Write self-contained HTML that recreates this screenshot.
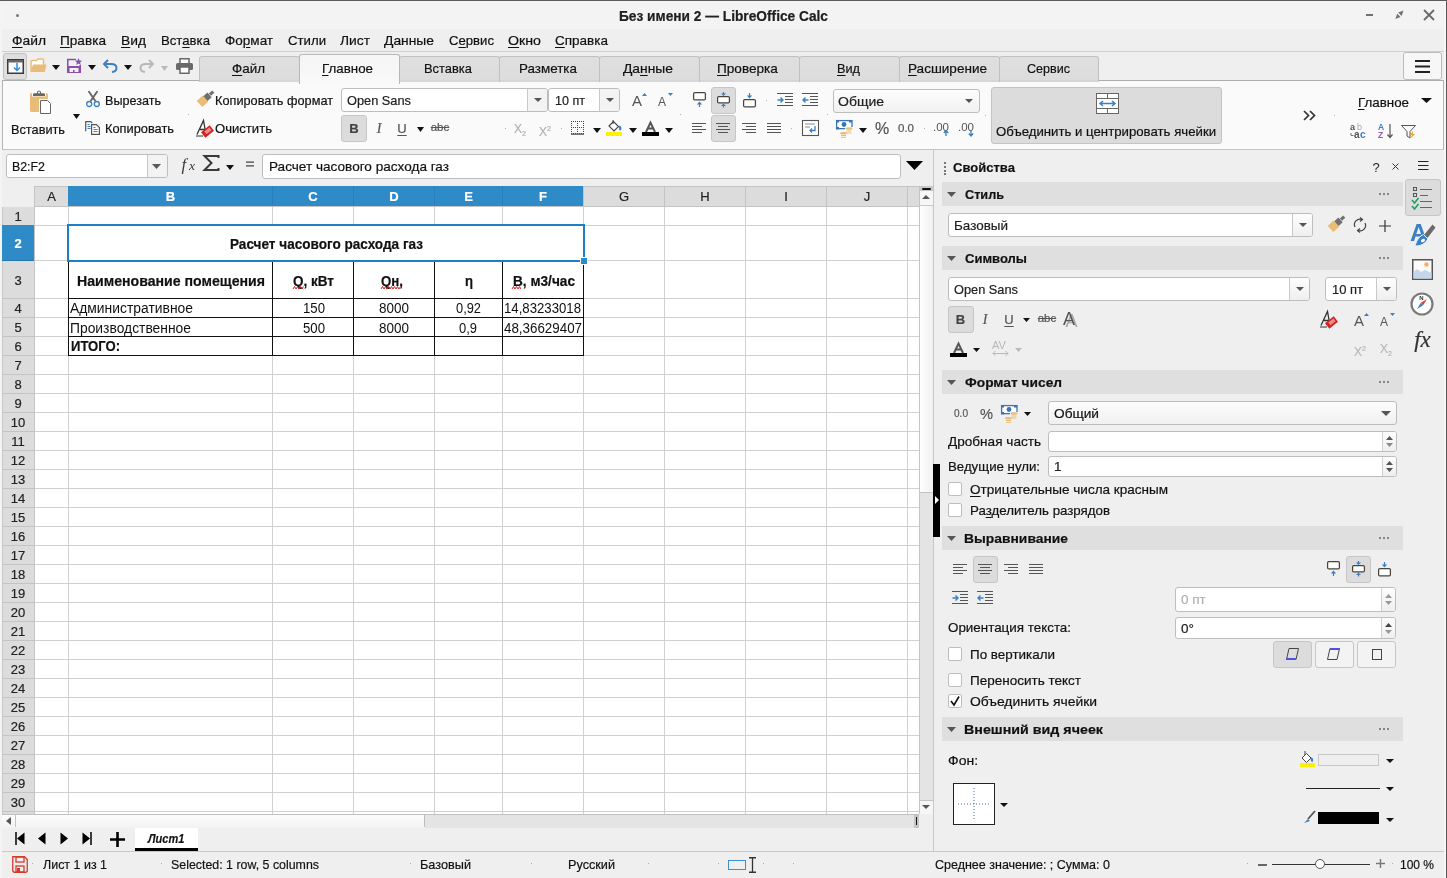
<!DOCTYPE html><html><head><meta charset="utf-8"><style>
html,body{margin:0;padding:0;width:1447px;height:878px;overflow:hidden;background:#efefef;}
body{position:relative;font-family:"Liberation Sans",sans-serif;}
body div, body svg{position:absolute;box-sizing:border-box;white-space:nowrap;} svg{overflow:visible;}
body div{-webkit-text-stroke:0.2px currentColor;} u{text-decoration:underline;text-underline-offset:2px;text-decoration-thickness:1px;}
</style></head><body><div style="left:0;top:0;width:1447px;height:878px;will-change:transform;">

<div style="left:0px;top:0px;width:1447px;height:29px;background:#f3f3f3;"></div>
<div style="left:0px;top:0px;width:1447px;height:1px;background:#5a5a5a;"></div>
<div style="left:1444px;top:1px;width:2px;height:877px;background:#f6f6f6;"></div>
<div style="left:1446px;top:0px;width:1px;height:878px;background:#5a5a5a;"></div>
<div style="left:0px;top:1px;width:2px;height:877px;background:#f4f4f4;"></div>
<div style="left:16px;top:14px;width:3px;height:3px;background:#777;border-radius:2px;"></div>
<div style="left:619.00px;top:7.0px;height:18px;line-height:18px;font-size:14px;font-weight:bold;color:#202020;transform:scaleX(0.9796);transform-origin:0 0;">Без имени 2 — LibreOffice Calc</div>
<div style="left:1366px;top:14px;width:7px;height:2px;background:#707070;"></div>
<svg style="left:1395px;top:10px;" width="9" height="10" viewBox="0 0 9 10"><path d="M8.5 0.5 L3.2 2.6 L6.6 6 Z M0.3 9 L2.3 3.8 L5.5 7 Z" fill="#707070"/></svg>
<svg style="left:1423px;top:9px;" width="12" height="12" viewBox="0 0 12 12"><path d="M1 1 L11 11 M11 1 L1 11" stroke="#6a6a6a" stroke-width="1.8"/></svg>
<div style="left:2px;top:29px;width:1443px;height:22px;background:#efefef;"></div>
<div style="left:2px;top:51px;width:1443px;height:1px;background:#cfcfcf;"></div>
<div style="left:12.00px;top:31.85px;height:17.5px;line-height:17.5px;font-size:13.5px;font-weight:normal;color:#111;transform:scaleX(1.0238);transform-origin:0 0;"><u>Ф</u>айл</div>
<div style="left:60.00px;top:31.85px;height:17.5px;line-height:17.5px;font-size:13.5px;font-weight:normal;color:#111;transform:scaleX(1.0081);transform-origin:0 0;"><u>П</u>равка</div>
<div style="left:121.00px;top:31.85px;height:17.5px;line-height:17.5px;font-size:13.5px;font-weight:normal;color:#111;transform:scaleX(1.0231);transform-origin:0 0;"><u>В</u>ид</div>
<div style="left:161.00px;top:31.85px;height:17.5px;line-height:17.5px;font-size:13.5px;font-weight:normal;color:#111;transform:scaleX(0.9757);transform-origin:0 0;">Вст<u>а</u>вка</div>
<div style="left:225.00px;top:31.85px;height:17.5px;line-height:17.5px;font-size:13.5px;font-weight:normal;color:#111;transform:scaleX(1.0016);transform-origin:0 0;">Фо<u>р</u>мат</div>
<div style="left:288.00px;top:31.85px;height:17.5px;line-height:17.5px;font-size:13.5px;font-weight:normal;color:#111;transform:scaleX(0.9774);transform-origin:0 0;">Стили</div>
<div style="left:340.00px;top:31.85px;height:17.5px;line-height:17.5px;font-size:13.5px;font-weight:normal;color:#111;transform:scaleX(1.0217);transform-origin:0 0;">Лист</div>
<div style="left:384.00px;top:31.85px;height:17.5px;line-height:17.5px;font-size:13.5px;font-weight:normal;color:#111;transform:scaleX(1.0245);transform-origin:0 0;"><u>Д</u>анные</div>
<div style="left:449.00px;top:31.85px;height:17.5px;line-height:17.5px;font-size:13.5px;font-weight:normal;color:#111;transform:scaleX(0.9732);transform-origin:0 0;">С<u>е</u>рвис</div>
<div style="left:508.00px;top:31.85px;height:17.5px;line-height:17.5px;font-size:13.5px;font-weight:normal;color:#111;transform:scaleX(1.0514);transform-origin:0 0;"><u>О</u>кно</div>
<div style="left:555.00px;top:31.85px;height:17.5px;line-height:17.5px;font-size:13.5px;font-weight:normal;color:#111;transform:scaleX(1.0002);transform-origin:0 0;"><u>С</u>правка</div>
<div style="left:2px;top:52px;width:1443px;height:28px;background:#efefef;"></div>
<div style="left:3px;top:53px;width:24px;height:27px;background:#dedede;border:1px solid #c2c2c2;border-radius:3px;"></div>
<svg style="left:7px;top:59px;" width="17" height="15" viewBox="0 0 17 15"><rect x="0.75" y="0.75" width="15.5" height="13.5" fill="#fff" stroke="#3a3a3a" stroke-width="1.5"/><rect x="1" y="1" width="15" height="2.5" fill="#666"/><path d="M10 4 V11 M7 8.5 L10 11.5 L13 8.5" stroke="#2a8ee0" stroke-width="1.5" fill="none"/></svg>
<svg style="left:30px;top:58px;" width="17" height="15" viewBox="0 0 17 15"><path d="M1 13 V3.5 Q1 2.5 2 2.5 H6.5 L8 1 H12.5 Q13.5 1 13.5 2 V7" fill="#fff" stroke="#e8bd78" stroke-width="1.5"/><path d="M3 6.5 H16.5 L14.8 14 H0.3 Z" fill="#e8bd78"/></svg>
<svg style="left:52px;top:65px;" width="8" height="5" viewBox="0 0 8 5"><path d="M0 0 H8 L4.0 5 Z" fill="#111"/></svg>
<svg style="left:67px;top:58px;" width="15" height="16" viewBox="0 0 15 16"><path d="M0.75 15 V1.5 H9" fill="none" stroke="#8a4db0" stroke-width="1.5"/><path d="M13.25 7 V15" fill="none" stroke="#8a4db0" stroke-width="1.5"/><path d="M0 8 H14 V15 H0 Z M2.5 10 V14 H11.5 V10 Z" fill="#8a4db0" fill-rule="evenodd"/><rect x="6" y="12" width="1.5" height="2" fill="#8a4db0"/><path d="M11.5 0 L12.5 2.6 L15 2.8 L13.1 4.5 L13.7 7 L11.5 5.6 L9.3 7 L9.9 4.5 L8 2.8 L10.5 2.6 Z" fill="#8a4db0"/></svg>
<svg style="left:88px;top:65px;" width="8" height="5" viewBox="0 0 8 5"><path d="M0 0 H8 L4.0 5 Z" fill="#111"/></svg>
<svg style="left:103px;top:59px;" width="15" height="14" viewBox="0 0 15 14"><path d="M5 1 L1 5 L5 9" fill="none" stroke="#3b7fc4" stroke-width="2"/><path d="M1.5 5 H8 Q13.5 5 13.5 9 Q13.5 12.5 9 13" fill="none" stroke="#3b7fc4" stroke-width="2"/></svg>
<svg style="left:124px;top:65px;" width="8" height="5" viewBox="0 0 8 5"><path d="M0 0 H8 L4.0 5 Z" fill="#111"/></svg>
<svg style="left:139px;top:59px;" width="15" height="14" viewBox="0 0 15 14"><path d="M10 1 L14 5 L10 9" fill="none" stroke="#b8b8b8" stroke-width="2"/><path d="M13.5 5 H7 Q1.5 5 1.5 9 Q1.5 12.5 6 13" fill="none" stroke="#b8b8b8" stroke-width="2"/></svg>
<svg style="left:161px;top:66px;" width="7" height="5" viewBox="0 0 7 5"><path d="M0 0 H7 L3.5 5 Z" fill="#b8b8b8"/></svg>
<svg style="left:176px;top:58px;" width="17" height="16" viewBox="0 0 17 16"><rect x="4" y="0.75" width="9" height="5" fill="#fff" stroke="#6a6a6a" stroke-width="1.5"/><rect x="0" y="5" width="17" height="7" rx="1.5" fill="#6a6a6a"/><rect x="4" y="9" width="9" height="6.25" fill="#fff" stroke="#6a6a6a" stroke-width="1.5"/></svg>
<div style="left:199px;top:56px;width:101px;height:26px;background:linear-gradient(#dfdfdf,#dcdcdc);border:1px solid #c0c0c0;border-bottom:1px solid #d0d0d0;border-radius:3px 3px 0 0;"></div>
<div style="left:232.00px;top:60.25px;height:17.5px;line-height:17.5px;font-size:13.5px;font-weight:normal;color:#111;transform:scaleX(0.9937);transform-origin:0 0;"><u>Ф</u>айл</div>
<div style="left:399px;top:56px;width:101px;height:26px;background:linear-gradient(#dfdfdf,#dcdcdc);border:1px solid #c0c0c0;border-bottom:1px solid #d0d0d0;border-radius:3px 3px 0 0;"></div>
<div style="left:424.00px;top:60.25px;height:17.5px;line-height:17.5px;font-size:13.5px;font-weight:normal;color:#111;transform:scaleX(0.9558);transform-origin:0 0;">Вставка</div>
<div style="left:499px;top:56px;width:101px;height:26px;background:linear-gradient(#dfdfdf,#dcdcdc);border:1px solid #c0c0c0;border-bottom:1px solid #d0d0d0;border-radius:3px 3px 0 0;"></div>
<div style="left:519.00px;top:60.25px;height:17.5px;line-height:17.5px;font-size:13.5px;font-weight:normal;color:#111;transform:scaleX(0.9934);transform-origin:0 0;">Разметка</div>
<div style="left:599px;top:56px;width:101px;height:26px;background:linear-gradient(#dfdfdf,#dcdcdc);border:1px solid #c0c0c0;border-bottom:1px solid #d0d0d0;border-radius:3px 3px 0 0;"></div>
<div style="left:623.00px;top:60.25px;height:17.5px;line-height:17.5px;font-size:13.5px;font-weight:normal;color:#111;transform:scaleX(1.0245);transform-origin:0 0;">Да<u>н</u>ные</div>
<div style="left:699px;top:56px;width:101px;height:26px;background:linear-gradient(#dfdfdf,#dcdcdc);border:1px solid #c0c0c0;border-bottom:1px solid #d0d0d0;border-radius:3px 3px 0 0;"></div>
<div style="left:717.00px;top:60.25px;height:17.5px;line-height:17.5px;font-size:13.5px;font-weight:normal;color:#111;transform:scaleX(1.0075);transform-origin:0 0;"><u>П</u>роверка</div>
<div style="left:799px;top:56px;width:101px;height:26px;background:linear-gradient(#dfdfdf,#dcdcdc);border:1px solid #c0c0c0;border-bottom:1px solid #d0d0d0;border-radius:3px 3px 0 0;"></div>
<div style="left:837.00px;top:60.25px;height:17.5px;line-height:17.5px;font-size:13.5px;font-weight:normal;color:#111;transform:scaleX(0.9413);transform-origin:0 0;"><u>В</u>ид</div>
<div style="left:899px;top:56px;width:101px;height:26px;background:linear-gradient(#dfdfdf,#dcdcdc);border:1px solid #c0c0c0;border-bottom:1px solid #d0d0d0;border-radius:3px 3px 0 0;"></div>
<div style="left:908.00px;top:60.25px;height:17.5px;line-height:17.5px;font-size:13.5px;font-weight:normal;color:#111;transform:scaleX(1.0037);transform-origin:0 0;"><u>Р</u>асширение</div>
<div style="left:999px;top:56px;width:100px;height:26px;background:linear-gradient(#dfdfdf,#dcdcdc);border:1px solid #c0c0c0;border-bottom:1px solid #d0d0d0;border-radius:3px 3px 0 0;"></div>
<div style="left:1027.00px;top:60.25px;height:17.5px;line-height:17.5px;font-size:13.5px;font-weight:normal;color:#111;transform:scaleX(0.9300);transform-origin:0 0;">Сервис</div>
<div style="left:1403px;top:52px;width:39px;height:28px;background:#f7f7f7;border:1px solid #bcbcbc;border-radius:3px;"></div>
<svg style="left:1415px;top:60px;" width="16" height="13" viewBox="0 0 16 13"><path d="M0 1 H15 M0 6.5 H15 M0 12 H15" stroke="#222" stroke-width="2"/></svg>
<div style="left:2px;top:80px;width:1442px;height:70px;background:#fafafa;border:1px solid #b4b4b4;border-top-color:#adadad;border-bottom-color:#c4c4c4;"></div>
<div style="left:199px;top:80px;width:101px;height:2px;background:#d6d6d6;border-left:1px solid #c0c0c0;border-right:1px solid #c0c0c0;"></div>
<div style="left:399px;top:80px;width:101px;height:2px;background:#d6d6d6;border-left:1px solid #c0c0c0;border-right:1px solid #c0c0c0;"></div>
<div style="left:499px;top:80px;width:101px;height:2px;background:#d6d6d6;border-left:1px solid #c0c0c0;border-right:1px solid #c0c0c0;"></div>
<div style="left:599px;top:80px;width:101px;height:2px;background:#d6d6d6;border-left:1px solid #c0c0c0;border-right:1px solid #c0c0c0;"></div>
<div style="left:699px;top:80px;width:101px;height:2px;background:#d6d6d6;border-left:1px solid #c0c0c0;border-right:1px solid #c0c0c0;"></div>
<div style="left:799px;top:80px;width:101px;height:2px;background:#d6d6d6;border-left:1px solid #c0c0c0;border-right:1px solid #c0c0c0;"></div>
<div style="left:899px;top:80px;width:101px;height:2px;background:#d6d6d6;border-left:1px solid #c0c0c0;border-right:1px solid #c0c0c0;"></div>
<div style="left:999px;top:80px;width:100px;height:2px;background:#d6d6d6;border-left:1px solid #c0c0c0;border-right:1px solid #c0c0c0;"></div>
<div style="left:299px;top:54px;width:101px;height:30px;background:linear-gradient(#f6f6f6,#f7f7f7 70%,#fafafa);border:1px solid #b8b8b8;border-bottom:none;border-radius:3px 3px 0 0;"></div>
<div style="left:322.00px;top:59.55px;height:17.5px;line-height:17.5px;font-size:13.5px;font-weight:normal;color:#111;transform:scaleX(0.9889);transform-origin:0 0;"><u>Г</u>лавное</div>
<svg style="left:30px;top:90px;" width="23" height="25" viewBox="0 0 23 25"><rect x="0" y="3" width="18" height="19" rx="1.5" fill="#e8bd78"/><rect x="2" y="0" width="14" height="6.5" fill="#fafafa"/><path d="M3 6 H15 V4.5 Q15 3.2 13.8 3.2 H11.2 Q11.2 0.6 9 0.6 Q6.8 0.6 6.8 3.2 H4.2 Q3 3.2 3 4.5 Z" fill="#666"/><circle cx="9" cy="2.6" r="1" fill="#fafafa"/><path d="M9 9 H18.5 L22 12.5 V24.5 H9 Z" fill="#fafafa"/><path d="M10.5 10.5 H17.5 L20.5 13.5 V23.5 H10.5 Z" fill="#fff" stroke="#666" stroke-width="1"/></svg>
<div style="left:11.00px;top:120.94999999999999px;height:17.5px;line-height:17.5px;font-size:13.5px;font-weight:normal;color:#111;transform:scaleX(0.9434);transform-origin:0 0;">Вставить</div>
<svg style="left:73px;top:114px;" width="7" height="5" viewBox="0 0 7 5"><path d="M0 0 H7 L3.5 5 Z" fill="#111"/></svg>
<svg style="left:86px;top:91px;" width="15" height="16" viewBox="0 0 15 16"><path d="M3 0.8 L9 9.5 M11 0.8 L5 9.5" stroke="#666" stroke-width="1.9" stroke-linecap="round"/><circle cx="3.2" cy="13" r="2.5" fill="none" stroke="#3b7fc4" stroke-width="1.3"/><circle cx="10.8" cy="13" r="2.5" fill="none" stroke="#3b7fc4" stroke-width="1.3"/></svg>
<div style="left:105.00px;top:91.75px;height:17.5px;line-height:17.5px;font-size:13.5px;font-weight:normal;color:#111;transform:scaleX(0.9322);transform-origin:0 0;">Вырезать</div>
<svg style="left:85px;top:121px;" width="16" height="15" viewBox="0 0 16 15"><path d="M0.7 10.3 V0.7 H5.8 L7.3 2.2" fill="none" stroke="#555" stroke-width="1.2"/><path d="M6.6 3.6 H11.5 L14.4 6.5 V13.4 H6.6 Z" fill="#fff" stroke="#555" stroke-width="1.2"/><path d="M2.5 3.5 H4.5 M2.5 5.5 H5.5 M2.5 7.5 H5.5 M8.5 6.5 H10.5 M8.5 8.5 H12.5 M8.5 10.5 H12.5" stroke="#3b7fc4" stroke-width="1"/></svg>
<div style="left:105.00px;top:119.85px;height:17.5px;line-height:17.5px;font-size:13.5px;font-weight:normal;color:#111;transform:scaleX(0.9491);transform-origin:0 0;">Копировать</div>
<svg style="left:196px;top:93px;" width="17" height="15" viewBox="0 0 17 15"><g transform="translate(3.5,11) rotate(-42)"><path d="M0 -4.2 H8 V4.2 H0 Z" fill="#e9bd77"/><rect x="8" y="-3.2" width="5.5" height="6.4" fill="#707070"/><rect x="14" y="-1.6" width="4.5" height="3.2" fill="#707070"/></g></svg>
<div style="left:215.00px;top:92.25px;height:17.5px;line-height:17.5px;font-size:13.5px;font-weight:normal;color:#111;transform:scaleX(0.9424);transform-origin:0 0;">Копировать формат</div>
<svg style="left:196px;top:119px;" width="18" height="18" viewBox="0 0 18 18"><path d="M1 15.5 L7.5 1.5 L9.5 12.5 M4 10.5 H9" stroke="#333" stroke-width="1.3" fill="none"/><path d="M0 17 H7" stroke="#333" stroke-width="1"/><g transform="translate(11.5,12.5) rotate(-38)"><rect x="-5.5" y="-3.5" width="11" height="7" fill="#d42222"/><rect x="-2.5" y="-2" width="6.5" height="3.5" fill="#f08a8a"/></g></svg>
<div style="left:215.00px;top:119.85px;height:17.5px;line-height:17.5px;font-size:13.5px;font-weight:normal;color:#111;transform:scaleX(0.9695);transform-origin:0 0;">Очистить</div>
<div style="left:341px;top:88px;width:207px;height:24px;background:#fff;border:1px solid #bdbdbd;border-radius:3px;"></div>
<div style="left:527px;top:89px;width:20px;height:22px;background:#f3f3f3;border-left:1px solid #c8c8c8;border-radius:0 2px 2px 0;"></div>
<svg style="left:533.5px;top:98.0px;" width="8" height="4" viewBox="0 0 8 4"><path d="M0 0 H8 L4 4 Z" fill="#555"/></svg>
<div style="left:347.00px;top:91.65px;height:17.5px;line-height:17.5px;font-size:13.5px;font-weight:normal;color:#202020;transform:scaleX(0.9472);transform-origin:0 0;">Open Sans</div>
<div style="left:548px;top:88px;width:72px;height:24px;background:#fff;border:1px solid #bdbdbd;border-radius:3px;"></div>
<div style="left:599px;top:89px;width:20px;height:22px;background:#f3f3f3;border-left:1px solid #c8c8c8;border-radius:0 2px 2px 0;"></div>
<svg style="left:605.5px;top:98.0px;" width="8" height="4" viewBox="0 0 8 4"><path d="M0 0 H8 L4 4 Z" fill="#555"/></svg>
<div style="left:555.00px;top:91.65px;height:17.5px;line-height:17.5px;font-size:13.5px;font-weight:normal;color:#202020;transform:scaleX(0.9298);transform-origin:0 0;">10 пт</div>
<div style="left:341px;top:115px;width:26px;height:27px;background:#dcdcdc;border:1px solid #c6c6c6;border-radius:3px;"></div>
<div style="left:344.0px;width:20px;text-align:center;top:120.0px;height:17px;line-height:17px;font-size:13px;font-weight:bold;color:#444;">B</div>
<div style="left:369.0px;width:20px;text-align:center;top:119.5px;height:18px;line-height:18px;font-size:14px;font-weight:normal;color:#555;font-family:'Liberation Serif';"><i>I</i></div>
<div style="left:392.0px;width:20px;text-align:center;top:119.5px;height:17px;line-height:17px;font-size:13px;font-weight:normal;color:#555;"><u>U</u></div>
<svg style="left:417px;top:127px;" width="7" height="5" viewBox="0 0 7 5"><path d="M0 0 H7 L3.5 5 Z" fill="#111"/></svg>
<div style="left:428.0px;width:24px;text-align:center;top:120.25px;height:15.5px;line-height:15.5px;font-size:11.5px;font-weight:normal;color:#555;"><s>abc</s></div>
<div style="left:510.0px;width:20px;text-align:center;top:120.5px;height:16px;line-height:16px;font-size:12px;font-weight:normal;color:#b0b0b0;">X<sub style="font-size:7px">2</sub></div>
<div style="left:535.0px;width:20px;text-align:center;top:120.5px;height:16px;line-height:16px;font-size:12px;font-weight:normal;color:#b0b0b0;">X<sup style="font-size:7px">2</sup></div>
<svg style="left:632px;top:92px;" width="16" height="15" viewBox="0 0 16 15"><text x="0" y="14" font-family="Liberation Sans" font-size="15" fill="#555">A</text><path d="M10 4 L12.5 1 L15 4 Z" fill="#3b7fc4"/></svg>
<svg style="left:658px;top:92px;" width="16" height="15" viewBox="0 0 16 15"><text x="0" y="14" font-family="Liberation Sans" font-size="12" fill="#555">A</text><path d="M10 1 L12.5 4 L15 1 Z" fill="#3b7fc4"/></svg>
<svg style="left:693px;top:92px;" width="13" height="15" viewBox="0 0 13 15"><rect x="0.6" y="0.6" width="11.8" height="7.3" rx="1.2" fill="#fff" stroke="#4a4538" stroke-width="1.25"/><path d="M6.5 15 V11.5" stroke="#3b7fc4" stroke-width="1.2"/><path d="M3.8 12.5 L6.5 9.5 L9.2 12.5 Z" fill="#3b7fc4"/></svg>
<div style="left:711px;top:87px;width:25px;height:27px;background:#dcdcdc;border:1px solid #c6c6c6;border-radius:3px;"></div>
<svg style="left:717px;top:92px;" width="13" height="15" viewBox="0 0 13 15"><rect x="0.6" y="4.6" width="11.8" height="6.3" rx="1.2" fill="#fff" stroke="#4a4538" stroke-width="1.25"/><path d="M6.5 0 V2" stroke="#3b7fc4" stroke-width="1.2"/><path d="M4 1.5 L6.5 4 L9 1.5 Z M4 14 L6.5 11.5 L9 14 Z" fill="#3b7fc4"/><path d="M6.5 13.5 V15.5" stroke="#3b7fc4" stroke-width="1.2"/></svg>
<svg style="left:743px;top:93px;" width="13" height="15" viewBox="0 0 13 15"><rect x="0.6" y="6.6" width="11.8" height="7.3" rx="1.2" fill="#fff" stroke="#4a4538" stroke-width="1.25"/><path d="M6.5 0 V3" stroke="#3b7fc4" stroke-width="1.2"/><path d="M3.8 2.5 L6.5 5.5 L9.2 2.5 Z" fill="#3b7fc4"/></svg>
<svg style="left:777px;top:93px;" width="17" height="14" viewBox="0 0 17 14"><path d="M0 0.5 H16 M8 3.5 H16 M8 6.5 H16 M8 9.5 H16 M0 12.5 H16" stroke="#555" stroke-width="1"/><path d="M0.5 7 H5.5 M3.5 4.5 L6 7 L3.5 9.5" stroke="#3b7fc4" stroke-width="1.4" fill="none"/></svg>
<svg style="left:802px;top:93px;" width="17" height="14" viewBox="0 0 17 14"><path d="M0 0.5 H16 M8 3.5 H16 M8 6.5 H16 M8 9.5 H16 M0 12.5 H16" stroke="#555" stroke-width="1"/><path d="M6.5 7 H1.5 M3.5 4.5 L1 7 L3.5 9.5" stroke="#3b7fc4" stroke-width="1.4" fill="none"/></svg>
<div style="left:833px;top:89px;width:147px;height:24px;background:linear-gradient(#fdfdfd,#f1f1f1);border:1px solid #bdbdbd;border-radius:3px;"></div>
<svg style="left:965px;top:99.0px;" width="8" height="4" viewBox="0 0 8 4"><path d="M0 0 H8 L4 4 Z" fill="#555"/></svg>
<div style="left:838.00px;top:92.75px;height:17.5px;line-height:17.5px;font-size:13.5px;font-weight:normal;color:#202020;transform:scaleX(1.0357);transform-origin:0 0;">Общие</div>
<svg style="left:571px;top:121px;" width="14" height="14" viewBox="0 0 14 14"><rect x="0" y="0" width="1" height="1" fill="#444"/><rect x="2" y="0" width="1" height="1" fill="#444"/><rect x="4" y="0" width="1" height="1" fill="#444"/><rect x="6" y="0" width="1" height="1" fill="#444"/><rect x="8" y="0" width="1" height="1" fill="#444"/><rect x="10" y="0" width="1" height="1" fill="#444"/><rect x="12" y="0" width="1" height="1" fill="#444"/><rect x="0" y="6" width="1" height="1" fill="#444"/><rect x="2" y="6" width="1" height="1" fill="#444"/><rect x="4" y="6" width="1" height="1" fill="#444"/><rect x="6" y="6" width="1" height="1" fill="#444"/><rect x="8" y="6" width="1" height="1" fill="#444"/><rect x="10" y="6" width="1" height="1" fill="#444"/><rect x="12" y="6" width="1" height="1" fill="#444"/><rect x="0" y="12" width="1" height="1" fill="#444"/><rect x="2" y="12" width="1" height="1" fill="#444"/><rect x="4" y="12" width="1" height="1" fill="#444"/><rect x="6" y="12" width="1" height="1" fill="#444"/><rect x="8" y="12" width="1" height="1" fill="#444"/><rect x="10" y="12" width="1" height="1" fill="#444"/><rect x="12" y="12" width="1" height="1" fill="#444"/><rect x="0" y="2" width="1" height="1" fill="#444"/><rect x="0" y="4" width="1" height="1" fill="#444"/><rect x="0" y="8" width="1" height="1" fill="#444"/><rect x="0" y="10" width="1" height="1" fill="#444"/><rect x="6" y="2" width="1" height="1" fill="#444"/><rect x="6" y="4" width="1" height="1" fill="#444"/><rect x="6" y="8" width="1" height="1" fill="#444"/><rect x="6" y="10" width="1" height="1" fill="#444"/><rect x="12" y="2" width="1" height="1" fill="#444"/><rect x="12" y="4" width="1" height="1" fill="#444"/><rect x="12" y="8" width="1" height="1" fill="#444"/><rect x="12" y="10" width="1" height="1" fill="#444"/><rect x="0" y="12.5" width="13" height="1.3" fill="#555"/></svg>
<svg style="left:593px;top:128px;" width="8" height="5" viewBox="0 0 8 5"><path d="M0 0 H8 L4.0 5 Z" fill="#111"/></svg>
<svg style="left:605px;top:119px;" width="18" height="18" viewBox="0 0 18 18"><path d="M4 7 L8.5 2.5 L13.5 7.5 L9 12 Z" fill="#fff" stroke="#444" stroke-width="1.1"/><path d="M8 1 V5" stroke="#444" stroke-width="1.1"/><path d="M14 7.5 Q16.5 9 14.5 11" stroke="#3b7fc4" stroke-width="2.2" fill="none"/><rect x="1" y="13" width="16" height="4" fill="#ffef00"/></svg>
<svg style="left:629px;top:128px;" width="8" height="5" viewBox="0 0 8 5"><path d="M0 0 H8 L4.0 5 Z" fill="#111"/></svg>
<svg style="left:642px;top:119px;" width="17" height="18" viewBox="0 0 17 18"><path d="M4 13 L8.5 3.5 L13 13 M5.5 9.5 H11.5" stroke="#555" stroke-width="2" fill="none"/><rect x="0" y="13" width="17" height="4" fill="#000"/></svg>
<svg style="left:665px;top:128px;" width="8" height="5" viewBox="0 0 8 5"><path d="M0 0 H8 L4.0 5 Z" fill="#111"/></svg>
<svg style="left:692px;top:122px;" width="14" height="13" viewBox="0 0 14 13"><path d="M0 1.5 H14 M0 4.5 H10 M0 7.5 H14 M0 10.5 H10" stroke="#555" stroke-width="1"/></svg>
<div style="left:711px;top:115px;width:25px;height:27px;background:#dcdcdc;border:1px solid #c6c6c6;border-radius:3px;"></div>
<svg style="left:716px;top:122px;" width="14" height="13" viewBox="0 0 14 13"><path d="M0 1.5 H14 M2 4.5 H12 M0 7.5 H14 M2 10.5 H12" stroke="#555" stroke-width="1"/></svg>
<svg style="left:742px;top:122px;" width="14" height="13" viewBox="0 0 14 13"><path d="M0 1.5 H14 M4 4.5 H14 M0 7.5 H14 M4 10.5 H14" stroke="#555" stroke-width="1"/></svg>
<svg style="left:767px;top:122px;" width="14" height="13" viewBox="0 0 14 13"><path d="M0 1.5 H14 M0 4.5 H14 M0 7.5 H14 M0 10.5 H14" stroke="#555" stroke-width="1"/></svg>
<svg style="left:802px;top:120px;" width="17" height="16" viewBox="0 0 17 16"><rect x="0.5" y="0.5" width="16" height="15" fill="#fff" stroke="#555" stroke-width="1.1"/><path d="M3 4 H13 M3 7 H8" stroke="#888" stroke-width="1"/><path d="M13 6 V10.5 H8 M10 8.5 L8 10.5 L10 12.5" stroke="#3b7fc4" stroke-width="1.3" fill="none"/></svg>
<svg style="left:835px;top:119px;" width="18" height="18" viewBox="0 0 18 18"><rect x="1.6" y="1.6" width="15.4" height="8" fill="#fff" stroke="#3a74b4" stroke-width="1.3"/><rect x="1" y="1" width="3" height="2.5" fill="#3a74b4"/><rect x="14" y="1" width="3" height="2.5" fill="#3a74b4"/><rect x="1" y="8" width="3" height="2.4" fill="#3a74b4"/><circle cx="9" cy="5.5" r="2.4" fill="#3a74b4"/><rect x="10" y="8" width="8" height="10" fill="#fafafa"/><rect x="5" y="11.5" width="6" height="7" fill="#fafafa"/><ellipse cx="14" cy="9.5" rx="3.5" ry="1.3" fill="#e8bd78"/><path d="M11.5 12 H16.5 M11.5 14 H16.5" stroke="#e8bd78" stroke-width="1"/><ellipse cx="8.5" cy="14.3" rx="3.5" ry="1.3" fill="#e8bd78"/><path d="M6 16.5 H11 M6 18.3 H11" stroke="#e8bd78" stroke-width="1"/></svg>
<svg style="left:859px;top:128px;" width="8" height="5" viewBox="0 0 8 5"><path d="M0 0 H8 L4.0 5 Z" fill="#111"/></svg>
<div style="left:872.0px;width:20px;text-align:center;top:118.5px;height:20px;line-height:20px;font-size:16px;font-weight:normal;color:#555;">%</div>
<div style="left:896.0px;width:20px;text-align:center;top:120.75px;height:15.5px;line-height:15.5px;font-size:11.5px;font-weight:normal;color:#555;">0.0</div>
<svg style="left:933px;top:119px;" width="18" height="18" viewBox="0 0 18 18"><text x="0" y="12" font-family="Liberation Sans" font-size="11.5" fill="#555">.00</text><path d="M13 17 V12 M10.8 14 L13 11.5 L15.2 14" stroke="#3b7fc4" stroke-width="1.3" fill="none"/></svg>
<svg style="left:958px;top:119px;" width="18" height="18" viewBox="0 0 18 18"><text x="0" y="12" font-family="Liberation Sans" font-size="11.5" fill="#555">.00</text><path d="M13 11.5 V16.5 M10.8 14.5 L13 17 L15.2 14.5" stroke="#3b7fc4" stroke-width="1.3" fill="none"/></svg>
<div style="left:991px;top:87px;width:231px;height:57px;background:#dcdcdc;border:1px solid #c4c4c4;border-radius:3px;"></div>
<svg style="left:1096px;top:93px;" width="24" height="22" viewBox="0 0 24 22"><rect x="0.5" y="0.5" width="22" height="20" fill="#fff" stroke="#666" stroke-width="1"/><path d="M0.5 5.5 H22.5 M0.5 15.5 H22.5 M11.5 0.5 V5.5 M11.5 15.5 V20.5" stroke="#666" stroke-width="1"/><path d="M4 10.5 H19 M7 8 L4 10.5 L7 13 M16 8 L19 10.5 L16 13" stroke="#3b7fc4" stroke-width="1.5" fill="none"/></svg>
<div style="left:996.00px;top:122.55000000000001px;height:17.5px;line-height:17.5px;font-size:13.5px;font-weight:normal;color:#111;transform:scaleX(0.9782);transform-origin:0 0;">Объединить и центрировать ячейки</div>
<svg style="left:1303px;top:110px;" width="13" height="11" viewBox="0 0 13 11"><path d="M1 1 L5.5 5.5 L1 10 M7 1 L11.5 5.5 L7 10" stroke="#333" stroke-width="1.7" fill="none"/></svg>
<div style="left:1358.00px;top:94.25px;height:17.5px;line-height:17.5px;font-size:13.5px;font-weight:normal;color:#111;transform:scaleX(0.9889);transform-origin:0 0;"><u>Г</u>лавное</div>
<svg style="left:1421px;top:98px;" width="11" height="5" viewBox="0 0 11 5"><path d="M0 0 H11 L5.5 5 Z" fill="#111"/></svg>
<svg style="left:1350px;top:123px;" width="18" height="16" viewBox="0 0 18 16"><text x="0" y="7" font-family="Liberation Sans" font-size="9" font-weight="bold" fill="#555">a</text><text x="7" y="7" font-family="Liberation Sans" font-size="9" fill="#aaa">b</text><text x="4" y="15" font-family="Liberation Sans" font-size="10" font-weight="bold" fill="#555">a</text><text x="10" y="15" font-family="Liberation Sans" font-size="10" font-weight="bold" fill="#3b7fc4">c</text><path d="M1 10 V12.5 H3.5" stroke="#3b7fc4" stroke-width="1" fill="none"/></svg>
<svg style="left:1378px;top:123px;" width="16" height="16" viewBox="0 0 16 16"><text x="0" y="7" font-family="Liberation Sans" font-size="8.5" font-weight="bold" fill="#3b7fc4">A</text><text x="0" y="15" font-family="Liberation Sans" font-size="8.5" font-weight="bold" fill="#9b59b6">Z</text><path d="M12 1 V14 M9.5 11.5 L12 14.5 L14.5 11.5" stroke="#555" stroke-width="1.2" fill="none"/></svg>
<svg style="left:1401px;top:125px;" width="16" height="14" viewBox="0 0 16 14"><path d="M0.5 0.5 H14.5 L9 6.5 V13 L6 11 V6.5 Z" fill="none" stroke="#555" stroke-width="1"/><path d="M12 6 L9 10 H11 L9.5 13.5 L14 9 H12 Z" fill="#f0a030"/></svg>
<div style="left:188px;top:114px;width:1px;height:1px;background:#b0b0b0;"></div>
<div style="left:505px;top:128px;width:1px;height:1px;background:#b0b0b0;"></div>
<div style="left:561px;top:128px;width:1px;height:1px;background:#b0b0b0;"></div>
<div style="left:680px;top:114px;width:1px;height:1px;background:#b0b0b0;"></div>
<div style="left:766px;top:100px;width:1px;height:1px;background:#b0b0b0;"></div>
<div style="left:791px;top:128px;width:1px;height:1px;background:#b0b0b0;"></div>
<div style="left:827px;top:114px;width:1px;height:1px;background:#b0b0b0;"></div>
<div style="left:924px;top:128px;width:1px;height:1px;background:#b0b0b0;"></div>
<div style="left:985px;top:115px;width:1px;height:1px;background:#b0b0b0;"></div>
<div style="left:1334px;top:115px;width:1px;height:1px;background:#b0b0b0;"></div>
<div style="left:6px;top:154px;width:162px;height:24px;background:#fff;border:1px solid #bdbdbd;border-radius:3px;"></div>
<div style="left:147px;top:155px;width:20px;height:22px;background:#f3f3f3;border-left:1px solid #c8c8c8;border-radius:0 2px 2px 0;"></div>
<svg style="left:152px;top:164px;" width="9" height="5" viewBox="0 0 9 5"><path d="M0 0 H9 L4.5 5 Z" fill="#5a5a5a"/></svg>
<div style="left:12.00px;top:158.05px;height:17.5px;line-height:17.5px;font-size:13.5px;font-weight:normal;color:#111;transform:scaleX(0.9155);transform-origin:0 0;">B2:F2</div>
<svg style="left:178px;top:155px;" width="22" height="20" viewBox="0 0 22 20"><text x="3.5" y="15" font-family="Liberation Serif" font-style="italic" font-size="17" fill="#3a3a3a">f</text><text x="11" y="15" font-family="Liberation Serif" font-style="italic" font-size="13.5" fill="#3a3a3a">x</text></svg>
<svg style="left:203px;top:155px;" width="17" height="17" viewBox="0 0 17 17"><path d="M15.5 3 V1 H1.5 L8.5 8 L1.5 15 H15.5 V13" fill="none" stroke="#3a3a3a" stroke-width="2"/></svg>
<svg style="left:226px;top:165px;" width="8" height="5" viewBox="0 0 8 5"><path d="M0 0 H8 L4.0 5 Z" fill="#111"/></svg>
<svg style="left:246px;top:161px;" width="9" height="6" viewBox="0 0 9 6"><path d="M0 1.2 H8 M0 4.8 H8" stroke="#444" stroke-width="1.2"/></svg>
<div style="left:262px;top:154px;width:639px;height:25px;background:#fff;border:1px solid #bdbdbd;border-radius:3px;"></div>
<div style="left:269.00px;top:157.75px;height:17.5px;line-height:17.5px;font-size:13.5px;font-weight:normal;color:#111;transform:scaleX(1.0059);transform-origin:0 0;">Расчет часового расхода газ</div>
<svg style="left:906px;top:161px;" width="17" height="10" viewBox="0 0 17 10"><path d="M0 0 H17 L8.5 9 Z" fill="#000"/></svg>
<div style="left:34px;top:186px;width:885px;height:628px;background:#fff;"></div>
<div style="left:68px;top:207px;width:1px;height:607px;background:#d0d0d0;"></div>
<div style="left:272px;top:207px;width:1px;height:607px;background:#d0d0d0;"></div>
<div style="left:353px;top:207px;width:1px;height:607px;background:#d0d0d0;"></div>
<div style="left:434px;top:207px;width:1px;height:607px;background:#d0d0d0;"></div>
<div style="left:502px;top:207px;width:1px;height:607px;background:#d0d0d0;"></div>
<div style="left:583px;top:207px;width:1px;height:607px;background:#d0d0d0;"></div>
<div style="left:664px;top:207px;width:1px;height:607px;background:#d0d0d0;"></div>
<div style="left:745px;top:207px;width:1px;height:607px;background:#d0d0d0;"></div>
<div style="left:826px;top:207px;width:1px;height:607px;background:#d0d0d0;"></div>
<div style="left:907px;top:207px;width:1px;height:607px;background:#d0d0d0;"></div>
<div style="left:35px;top:225px;width:884px;height:1px;background:#d0d0d0;"></div>
<div style="left:35px;top:260px;width:884px;height:1px;background:#d0d0d0;"></div>
<div style="left:35px;top:298px;width:884px;height:1px;background:#d0d0d0;"></div>
<div style="left:35px;top:317px;width:884px;height:1px;background:#d0d0d0;"></div>
<div style="left:35px;top:336px;width:884px;height:1px;background:#d0d0d0;"></div>
<div style="left:35px;top:355px;width:884px;height:1px;background:#d0d0d0;"></div>
<div style="left:35px;top:374px;width:884px;height:1px;background:#d0d0d0;"></div>
<div style="left:35px;top:393px;width:884px;height:1px;background:#d0d0d0;"></div>
<div style="left:35px;top:412px;width:884px;height:1px;background:#d0d0d0;"></div>
<div style="left:35px;top:431px;width:884px;height:1px;background:#d0d0d0;"></div>
<div style="left:35px;top:450px;width:884px;height:1px;background:#d0d0d0;"></div>
<div style="left:35px;top:469px;width:884px;height:1px;background:#d0d0d0;"></div>
<div style="left:35px;top:488px;width:884px;height:1px;background:#d0d0d0;"></div>
<div style="left:35px;top:507px;width:884px;height:1px;background:#d0d0d0;"></div>
<div style="left:35px;top:526px;width:884px;height:1px;background:#d0d0d0;"></div>
<div style="left:35px;top:545px;width:884px;height:1px;background:#d0d0d0;"></div>
<div style="left:35px;top:564px;width:884px;height:1px;background:#d0d0d0;"></div>
<div style="left:35px;top:583px;width:884px;height:1px;background:#d0d0d0;"></div>
<div style="left:35px;top:602px;width:884px;height:1px;background:#d0d0d0;"></div>
<div style="left:35px;top:621px;width:884px;height:1px;background:#d0d0d0;"></div>
<div style="left:35px;top:640px;width:884px;height:1px;background:#d0d0d0;"></div>
<div style="left:35px;top:659px;width:884px;height:1px;background:#d0d0d0;"></div>
<div style="left:35px;top:678px;width:884px;height:1px;background:#d0d0d0;"></div>
<div style="left:35px;top:697px;width:884px;height:1px;background:#d0d0d0;"></div>
<div style="left:35px;top:716px;width:884px;height:1px;background:#d0d0d0;"></div>
<div style="left:35px;top:735px;width:884px;height:1px;background:#d0d0d0;"></div>
<div style="left:35px;top:754px;width:884px;height:1px;background:#d0d0d0;"></div>
<div style="left:35px;top:773px;width:884px;height:1px;background:#d0d0d0;"></div>
<div style="left:35px;top:792px;width:884px;height:1px;background:#d0d0d0;"></div>
<div style="left:35px;top:811px;width:884px;height:1px;background:#d0d0d0;"></div>
<div style="left:34px;top:186px;width:885px;height:21px;background:#dcdcdc;border-top:1px solid #c4c4c4;border-bottom:1px solid #c4c4c4;"></div>
<div style="left:68px;top:186px;width:515px;height:20px;background:#2e8bc8;"></div>
<div style="left:34px;top:186px;width:1px;height:21px;background:#c4c4c4;"></div>
<div style="left:34.5px;width:34px;text-align:center;top:188.0px;height:17px;line-height:17px;font-size:13px;font-weight:normal;color:#222;">A</div>
<div style="left:68.5px;width:204px;text-align:center;top:188.0px;height:17px;line-height:17px;font-size:13px;font-weight:bold;color:#fff;">B</div>
<div style="left:272px;top:186px;width:1px;height:20px;background:#2b80bb;"></div>
<div style="left:272.5px;width:81px;text-align:center;top:188.0px;height:17px;line-height:17px;font-size:13px;font-weight:bold;color:#fff;">C</div>
<div style="left:353px;top:186px;width:1px;height:20px;background:#2b80bb;"></div>
<div style="left:353.5px;width:81px;text-align:center;top:188.0px;height:17px;line-height:17px;font-size:13px;font-weight:bold;color:#fff;">D</div>
<div style="left:434px;top:186px;width:1px;height:20px;background:#2b80bb;"></div>
<div style="left:434.5px;width:68px;text-align:center;top:188.0px;height:17px;line-height:17px;font-size:13px;font-weight:bold;color:#fff;">E</div>
<div style="left:502px;top:186px;width:1px;height:20px;background:#2b80bb;"></div>
<div style="left:502.5px;width:81px;text-align:center;top:188.0px;height:17px;line-height:17px;font-size:13px;font-weight:bold;color:#fff;">F</div>
<div style="left:583px;top:186px;width:1px;height:21px;background:#c4c4c4;"></div>
<div style="left:583.5px;width:81px;text-align:center;top:188.0px;height:17px;line-height:17px;font-size:13px;font-weight:normal;color:#222;">G</div>
<div style="left:664px;top:186px;width:1px;height:21px;background:#c4c4c4;"></div>
<div style="left:664.5px;width:81px;text-align:center;top:188.0px;height:17px;line-height:17px;font-size:13px;font-weight:normal;color:#222;">H</div>
<div style="left:745px;top:186px;width:1px;height:21px;background:#c4c4c4;"></div>
<div style="left:745.5px;width:81px;text-align:center;top:188.0px;height:17px;line-height:17px;font-size:13px;font-weight:normal;color:#222;">I</div>
<div style="left:826px;top:186px;width:1px;height:21px;background:#c4c4c4;"></div>
<div style="left:826.5px;width:81px;text-align:center;top:188.0px;height:17px;line-height:17px;font-size:13px;font-weight:normal;color:#222;">J</div>
<div style="left:583px;top:186px;width:1px;height:21px;background:#c4c4c4;"></div>
<div style="left:907px;top:186px;width:1px;height:21px;background:#c4c4c4;"></div>
<div style="left:2px;top:207px;width:32px;height:607px;background:#dcdcdc;border-left:1px solid #c8c8c8;"></div>
<div style="left:2px;top:225px;width:32px;height:1px;background:#c4c4c4;"></div>
<div style="left:2.0px;width:32px;text-align:center;top:208.0px;height:17px;line-height:17px;font-size:13px;font-weight:normal;color:#222;">1</div>
<div style="left:2px;top:225px;width:32px;height:35px;background:#2e8bc8;"></div>
<div style="left:2px;top:260px;width:32px;height:1px;background:#2478b5;"></div>
<div style="left:2.0px;width:32px;text-align:center;top:235.0px;height:17px;line-height:17px;font-size:13px;font-weight:bold;color:#fff;">2</div>
<div style="left:2px;top:298px;width:32px;height:1px;background:#c4c4c4;"></div>
<div style="left:2.0px;width:32px;text-align:center;top:271.5px;height:17px;line-height:17px;font-size:13px;font-weight:normal;color:#222;">3</div>
<div style="left:2px;top:317px;width:32px;height:1px;background:#c4c4c4;"></div>
<div style="left:2.0px;width:32px;text-align:center;top:300.0px;height:17px;line-height:17px;font-size:13px;font-weight:normal;color:#222;">4</div>
<div style="left:2px;top:336px;width:32px;height:1px;background:#c4c4c4;"></div>
<div style="left:2.0px;width:32px;text-align:center;top:319.0px;height:17px;line-height:17px;font-size:13px;font-weight:normal;color:#222;">5</div>
<div style="left:2px;top:355px;width:32px;height:1px;background:#c4c4c4;"></div>
<div style="left:2.0px;width:32px;text-align:center;top:338.0px;height:17px;line-height:17px;font-size:13px;font-weight:normal;color:#222;">6</div>
<div style="left:2px;top:374px;width:32px;height:1px;background:#c4c4c4;"></div>
<div style="left:2.0px;width:32px;text-align:center;top:357.0px;height:17px;line-height:17px;font-size:13px;font-weight:normal;color:#222;">7</div>
<div style="left:2px;top:393px;width:32px;height:1px;background:#c4c4c4;"></div>
<div style="left:2.0px;width:32px;text-align:center;top:376.0px;height:17px;line-height:17px;font-size:13px;font-weight:normal;color:#222;">8</div>
<div style="left:2px;top:412px;width:32px;height:1px;background:#c4c4c4;"></div>
<div style="left:2.0px;width:32px;text-align:center;top:395.0px;height:17px;line-height:17px;font-size:13px;font-weight:normal;color:#222;">9</div>
<div style="left:2px;top:431px;width:32px;height:1px;background:#c4c4c4;"></div>
<div style="left:2.0px;width:32px;text-align:center;top:414.0px;height:17px;line-height:17px;font-size:13px;font-weight:normal;color:#222;">10</div>
<div style="left:2px;top:450px;width:32px;height:1px;background:#c4c4c4;"></div>
<div style="left:2.0px;width:32px;text-align:center;top:433.0px;height:17px;line-height:17px;font-size:13px;font-weight:normal;color:#222;">11</div>
<div style="left:2px;top:469px;width:32px;height:1px;background:#c4c4c4;"></div>
<div style="left:2.0px;width:32px;text-align:center;top:452.0px;height:17px;line-height:17px;font-size:13px;font-weight:normal;color:#222;">12</div>
<div style="left:2px;top:488px;width:32px;height:1px;background:#c4c4c4;"></div>
<div style="left:2.0px;width:32px;text-align:center;top:471.0px;height:17px;line-height:17px;font-size:13px;font-weight:normal;color:#222;">13</div>
<div style="left:2px;top:507px;width:32px;height:1px;background:#c4c4c4;"></div>
<div style="left:2.0px;width:32px;text-align:center;top:490.0px;height:17px;line-height:17px;font-size:13px;font-weight:normal;color:#222;">14</div>
<div style="left:2px;top:526px;width:32px;height:1px;background:#c4c4c4;"></div>
<div style="left:2.0px;width:32px;text-align:center;top:509.0px;height:17px;line-height:17px;font-size:13px;font-weight:normal;color:#222;">15</div>
<div style="left:2px;top:545px;width:32px;height:1px;background:#c4c4c4;"></div>
<div style="left:2.0px;width:32px;text-align:center;top:528.0px;height:17px;line-height:17px;font-size:13px;font-weight:normal;color:#222;">16</div>
<div style="left:2px;top:564px;width:32px;height:1px;background:#c4c4c4;"></div>
<div style="left:2.0px;width:32px;text-align:center;top:547.0px;height:17px;line-height:17px;font-size:13px;font-weight:normal;color:#222;">17</div>
<div style="left:2px;top:583px;width:32px;height:1px;background:#c4c4c4;"></div>
<div style="left:2.0px;width:32px;text-align:center;top:566.0px;height:17px;line-height:17px;font-size:13px;font-weight:normal;color:#222;">18</div>
<div style="left:2px;top:602px;width:32px;height:1px;background:#c4c4c4;"></div>
<div style="left:2.0px;width:32px;text-align:center;top:585.0px;height:17px;line-height:17px;font-size:13px;font-weight:normal;color:#222;">19</div>
<div style="left:2px;top:621px;width:32px;height:1px;background:#c4c4c4;"></div>
<div style="left:2.0px;width:32px;text-align:center;top:604.0px;height:17px;line-height:17px;font-size:13px;font-weight:normal;color:#222;">20</div>
<div style="left:2px;top:640px;width:32px;height:1px;background:#c4c4c4;"></div>
<div style="left:2.0px;width:32px;text-align:center;top:623.0px;height:17px;line-height:17px;font-size:13px;font-weight:normal;color:#222;">21</div>
<div style="left:2px;top:659px;width:32px;height:1px;background:#c4c4c4;"></div>
<div style="left:2.0px;width:32px;text-align:center;top:642.0px;height:17px;line-height:17px;font-size:13px;font-weight:normal;color:#222;">22</div>
<div style="left:2px;top:678px;width:32px;height:1px;background:#c4c4c4;"></div>
<div style="left:2.0px;width:32px;text-align:center;top:661.0px;height:17px;line-height:17px;font-size:13px;font-weight:normal;color:#222;">23</div>
<div style="left:2px;top:697px;width:32px;height:1px;background:#c4c4c4;"></div>
<div style="left:2.0px;width:32px;text-align:center;top:680.0px;height:17px;line-height:17px;font-size:13px;font-weight:normal;color:#222;">24</div>
<div style="left:2px;top:716px;width:32px;height:1px;background:#c4c4c4;"></div>
<div style="left:2.0px;width:32px;text-align:center;top:699.0px;height:17px;line-height:17px;font-size:13px;font-weight:normal;color:#222;">25</div>
<div style="left:2px;top:735px;width:32px;height:1px;background:#c4c4c4;"></div>
<div style="left:2.0px;width:32px;text-align:center;top:718.0px;height:17px;line-height:17px;font-size:13px;font-weight:normal;color:#222;">26</div>
<div style="left:2px;top:754px;width:32px;height:1px;background:#c4c4c4;"></div>
<div style="left:2.0px;width:32px;text-align:center;top:737.0px;height:17px;line-height:17px;font-size:13px;font-weight:normal;color:#222;">27</div>
<div style="left:2px;top:773px;width:32px;height:1px;background:#c4c4c4;"></div>
<div style="left:2.0px;width:32px;text-align:center;top:756.0px;height:17px;line-height:17px;font-size:13px;font-weight:normal;color:#222;">28</div>
<div style="left:2px;top:792px;width:32px;height:1px;background:#c4c4c4;"></div>
<div style="left:2.0px;width:32px;text-align:center;top:775.0px;height:17px;line-height:17px;font-size:13px;font-weight:normal;color:#222;">29</div>
<div style="left:2px;top:811px;width:32px;height:1px;background:#c4c4c4;"></div>
<div style="left:2.0px;width:32px;text-align:center;top:794.0px;height:17px;line-height:17px;font-size:13px;font-weight:normal;color:#222;">30</div>
<div style="left:34px;top:207px;width:1px;height:607px;background:#c4c4c4;"></div>
<div style="left:69px;top:226px;width:514px;height:34px;background:#fff;"></div>
<div style="left:68px;top:298px;width:516px;height:1px;background:#111;"></div>
<div style="left:68px;top:317px;width:516px;height:1px;background:#111;"></div>
<div style="left:68px;top:336px;width:516px;height:1px;background:#111;"></div>
<div style="left:68px;top:355px;width:516px;height:1px;background:#111;"></div>
<div style="left:68px;top:260px;width:516px;height:1px;background:#111;"></div>
<div style="left:68px;top:260px;width:1px;height:96px;background:#111;"></div>
<div style="left:272px;top:260px;width:1px;height:96px;background:#111;"></div>
<div style="left:353px;top:260px;width:1px;height:96px;background:#111;"></div>
<div style="left:434px;top:260px;width:1px;height:96px;background:#111;"></div>
<div style="left:502px;top:260px;width:1px;height:96px;background:#111;"></div>
<div style="left:583px;top:260px;width:1px;height:96px;background:#111;"></div>
<div style="left:67px;top:224px;width:518px;height:38px;border:2px solid #1f7fc6;"></div>
<div style="left:580px;top:257px;width:8px;height:8px;background:#2e8bc8;border:1px solid #fff;"></div>
<div style="left:230.00px;top:234.5px;height:18px;line-height:18px;font-size:14px;font-weight:bold;color:#111;transform:scaleX(0.9688);transform-origin:0 0;">Расчет часового расхода газ</div>
<div style="left:77.00px;top:271.8px;height:18px;line-height:18px;font-size:14px;font-weight:bold;color:#111;transform:scaleX(1.0085);transform-origin:0 0;">Наименование помещения</div>
<div style="left:293.00px;top:272.0px;height:18px;line-height:18px;font-size:14px;font-weight:bold;color:#111;transform:scaleX(0.9649);transform-origin:0 0;">Q, кВт</div>
<div style="left:381.00px;top:272.0px;height:18px;line-height:18px;font-size:14px;font-weight:bold;color:#111;transform:scaleX(0.9466);transform-origin:0 0;">Qн,</div>
<div style="left:465.00px;top:272.0px;height:18px;line-height:18px;font-size:14px;font-weight:bold;color:#111;transform:scaleX(0.9368);transform-origin:0 0;">η</div>
<div style="left:513.00px;top:272.0px;height:18px;line-height:18px;font-size:14px;font-weight:bold;color:#111;transform:scaleX(0.9744);transform-origin:0 0;">В, м3/час</div>
<svg style="left:293px;top:286px;" width="11" height="4" viewBox="0 0 11 4"><path d="M0 3 L1.5 0.5 L3.0 3.0 L4.5 0.5 L6.0 3.0 L7.5 0.5 L9.0 3.0 L10.5 0.5" stroke="#e02020" stroke-width="1" fill="none"/></svg>
<svg style="left:381px;top:286px;" width="20" height="4" viewBox="0 0 20 4"><path d="M0 3 L1.5 0.5 L3.0 3.0 L4.5 0.5 L6.0 3.0 L7.5 0.5 L9.0 3.0 L10.5 0.5 L12.0 3.0 L13.5 0.5 L15.0 3.0 L16.5 0.5 L18.0 3.0 L19.5 0.5" stroke="#e02020" stroke-width="1" fill="none"/></svg>
<svg style="left:512px;top:286px;" width="10" height="4" viewBox="0 0 10 4"><path d="M0 3 L1.5 0.5 L3.0 3.0 L4.5 0.5 L6.0 3.0 L7.5 0.5 L9.0 3.0" stroke="#e02020" stroke-width="1" fill="none"/></svg>
<div style="left:70.00px;top:299.4px;height:18px;line-height:18px;font-size:14px;font-weight:normal;color:#111;transform:scaleX(0.9905);transform-origin:0 0;-webkit-text-stroke:0;">Административное</div>
<div style="left:70.00px;top:318.6px;height:18px;line-height:18px;font-size:14px;font-weight:normal;color:#111;transform:scaleX(0.9895);transform-origin:0 0;-webkit-text-stroke:0;">Производственное</div>
<div style="left:71.00px;top:337.2px;height:18px;line-height:18px;font-size:14px;font-weight:bold;color:#111;transform:scaleX(0.9346);transform-origin:0 0;">ИТОГО:</div>
<div style="left:303.00px;top:299.4px;height:18px;line-height:18px;font-size:14px;font-weight:normal;color:#111;transform:scaleX(0.9410);transform-origin:0 0;-webkit-text-stroke:0;">150</div>
<div style="left:303.00px;top:318.6px;height:18px;line-height:18px;font-size:14px;font-weight:normal;color:#111;transform:scaleX(0.9410);transform-origin:0 0;-webkit-text-stroke:0;">500</div>
<div style="left:379.00px;top:299.4px;height:18px;line-height:18px;font-size:14px;font-weight:normal;color:#111;transform:scaleX(0.9631);transform-origin:0 0;-webkit-text-stroke:0;">8000</div>
<div style="left:379.00px;top:318.6px;height:18px;line-height:18px;font-size:14px;font-weight:normal;color:#111;transform:scaleX(0.9631);transform-origin:0 0;-webkit-text-stroke:0;">8000</div>
<div style="left:456.00px;top:299.4px;height:18px;line-height:18px;font-size:14px;font-weight:normal;color:#111;transform:scaleX(0.9181);transform-origin:0 0;-webkit-text-stroke:0;">0,92</div>
<div style="left:459.00px;top:318.6px;height:18px;line-height:18px;font-size:14px;font-weight:normal;color:#111;transform:scaleX(0.9250);transform-origin:0 0;-webkit-text-stroke:0;">0,9</div>
<div style="left:504.00px;top:299.4px;height:18px;line-height:18px;font-size:14px;font-weight:normal;color:#111;transform:scaleX(0.9418);transform-origin:0 0;-webkit-text-stroke:0;">14,83233018</div>
<div style="left:504.00px;top:318.6px;height:18px;line-height:18px;font-size:14px;font-weight:normal;color:#111;transform:scaleX(0.9540);transform-origin:0 0;-webkit-text-stroke:0;">48,36629407</div>
<div style="left:919px;top:186px;width:14px;height:628px;background:#e4e4e4;border-left:1px solid #c4c4c4;"></div>
<div style="left:920px;top:186px;width:13px;height:5px;background:#c8c8c8;"></div>
<div style="left:922px;top:188px;width:9px;height:2px;background:#111;border-radius:1px;"></div>
<div style="left:920px;top:191px;width:13px;height:14px;background:#f6f6f6;"></div>
<div style="left:920px;top:205px;width:13px;height:1px;background:#c8c8c8;"></div>
<svg style="left:922px;top:195px;" width="8" height="4" viewBox="0 0 8 4"><path d="M0 4 H8 L4 0 Z" fill="#555"/></svg>
<div style="left:920px;top:206px;width:13px;height:286px;background:linear-gradient(90deg,#fff,#f0f0f0);"></div>
<div style="left:920px;top:492px;width:13px;height:1px;background:#c4c4c4;"></div>
<div style="left:920px;top:800px;width:13px;height:1px;background:#c4c4c4;"></div>
<div style="left:920px;top:801px;width:13px;height:13px;background:#f6f6f6;"></div>
<svg style="left:922px;top:805px;" width="8" height="4" viewBox="0 0 8 4"><path d="M0 0 H8 L4 4 Z" fill="#555"/></svg>
<div style="left:2px;top:814px;width:917px;height:1px;background:#c0c0c0;"></div>
<div style="left:2px;top:815px;width:917px;height:13px;background:linear-gradient(#fdfdfd,#f2f2f2);"></div>
<svg style="left:6px;top:817px;" width="5" height="8" viewBox="0 0 5 8"><path d="M5 0 V8 L0 4 Z" fill="#555"/></svg>
<div style="left:15px;top:815px;width:1px;height:12px;background:#c4c4c4;"></div>
<div style="left:424px;top:815px;width:1px;height:12px;background:#bdbdbd;"></div>
<div style="left:425px;top:815px;width:489px;height:13px;background:#e4e4e4;"></div>
<div style="left:914px;top:815px;width:5px;height:13px;background:#c4c4c4;"></div>
<div style="left:916px;top:817px;width:1px;height:8px;background:#111;"></div>
<div style="left:919px;top:814px;width:14px;height:14px;background:#efefef;"></div>
<div style="left:2px;top:828px;width:931px;height:23px;background:#efefef;"></div>
<svg style="left:15px;top:832px;" width="10" height="13" viewBox="0 0 10 13"><path d="M1 0 V13" stroke="#000" stroke-width="1.5"/><path d="M9.5 0.5 V12.5 L2 6.5 Z" fill="#000"/></svg>
<svg style="left:38px;top:832px;" width="8" height="13" viewBox="0 0 8 13"><path d="M7.5 0.5 V12.5 L0 6.5 Z" fill="#000"/></svg>
<svg style="left:60px;top:832px;" width="8" height="13" viewBox="0 0 8 13"><path d="M0.5 0.5 V12.5 L8 6.5 Z" fill="#000"/></svg>
<svg style="left:82px;top:832px;" width="10" height="13" viewBox="0 0 10 13"><path d="M0.5 0.5 V12.5 L8 6.5 Z" fill="#000"/><path d="M9 0 V13" stroke="#000" stroke-width="1.5"/></svg>
<svg style="left:110px;top:832px;" width="15" height="15" viewBox="0 0 15 15"><path d="M7.5 0 V15 M0 7.5 H15" stroke="#000" stroke-width="2.6"/></svg>
<div style="left:135px;top:828px;width:63px;height:23px;background:#fff;"></div>
<div style="left:135px;top:848px;width:63px;height:3px;background:#000;"></div>
<div style="left:147.71px;top:829.55px;height:17.5px;line-height:17.5px;font-size:13.5px;font-weight:bold;color:#111;transform:scaleX(0.8145);transform-origin:0 0;font-style:italic;">Лист1</div>
<div style="left:2px;top:851px;width:1443px;height:1px;background:#c8c8c8;"></div>
<div style="left:2px;top:852px;width:1443px;height:26px;background:#efefef;"></div>
<svg style="left:12px;top:856px;" width="16" height="17" viewBox="0 0 16 17"><path d="M0.75 0.75 H12.5 L15.25 3.5 V15.25 L14 16.25 H2 L0.75 15 Z" fill="none" stroke="#d83a2a" stroke-width="1.3"/><rect x="4" y="1" width="8" height="5" fill="none" stroke="#d83a2a" stroke-width="1.3"/><rect x="4" y="10" width="8" height="6" fill="none" stroke="#d83a2a" stroke-width="1.3"/><rect x="5" y="12" width="3" height="4" fill="#d83a2a"/></svg>
<div style="left:43.00px;top:855.75px;height:17.5px;line-height:17.5px;font-size:13.5px;font-weight:normal;color:#111;transform:scaleX(0.9232);transform-origin:0 0;">Лист 1 из 1</div>
<div style="left:171.00px;top:855.75px;height:17.5px;line-height:17.5px;font-size:13.5px;font-weight:normal;color:#111;transform:scaleX(0.9174);transform-origin:0 0;">Selected: 1 row, 5 columns</div>
<div style="left:420.00px;top:855.75px;height:17.5px;line-height:17.5px;font-size:13.5px;font-weight:normal;color:#111;transform:scaleX(0.9409);transform-origin:0 0;">Базовый</div>
<div style="left:568.00px;top:855.75px;height:17.5px;line-height:17.5px;font-size:13.5px;font-weight:normal;color:#111;transform:scaleX(0.9384);transform-origin:0 0;">Русский</div>
<div style="left:728px;top:860px;width:18px;height:10px;border:1.5px solid #3b8fd0;"></div>
<svg style="left:748px;top:857px;" width="9" height="16" viewBox="0 0 9 16"><path d="M1 0.75 H8 M4.5 0.75 V15.25 M1 15.25 H8" stroke="#333" stroke-width="1.3" fill="none"/></svg>
<div style="left:935.00px;top:855.75px;height:17.5px;line-height:17.5px;font-size:13.5px;font-weight:normal;color:#111;transform:scaleX(0.9263);transform-origin:0 0;">Среднее значение: ; Сумма: 0</div>
<div style="left:1258px;top:864px;width:9px;height:1.5px;background:#666;"></div>
<div style="left:1272px;top:864px;width:98px;height:1px;background:#333;"></div>
<div style="left:1315px;top:859px;width:10px;height:10px;background:#fff;border:1px solid #555;border-radius:50%;"></div>
<svg style="left:1376px;top:859px;" width="9" height="9" viewBox="0 0 9 9"><path d="M4.5 0 V9 M0 4.5 H9" stroke="#777" stroke-width="1.4"/></svg>
<div style="left:1400.00px;top:855.75px;height:17.5px;line-height:17.5px;font-size:13.5px;font-weight:normal;color:#111;transform:scaleX(0.8884);transform-origin:0 0;">100 %</div>
<div style="left:32px;top:863px;width:1px;height:1px;background:#a8a8a8;"></div>
<div style="left:161px;top:863px;width:1px;height:1px;background:#a8a8a8;"></div>
<div style="left:410px;top:863px;width:1px;height:1px;background:#a8a8a8;"></div>
<div style="left:531px;top:863px;width:1px;height:1px;background:#a8a8a8;"></div>
<div style="left:648px;top:863px;width:1px;height:1px;background:#a8a8a8;"></div>
<div style="left:718px;top:863px;width:1px;height:1px;background:#a8a8a8;"></div>
<div style="left:763px;top:863px;width:1px;height:1px;background:#a8a8a8;"></div>
<div style="left:793px;top:863px;width:1px;height:1px;background:#a8a8a8;"></div>
<div style="left:1247px;top:863px;width:1px;height:1px;background:#a8a8a8;"></div>
<div style="left:1392px;top:863px;width:1px;height:1px;background:#a8a8a8;"></div>
<div style="left:933px;top:150px;width:512px;height:701px;background:#efefef;"></div>
<div style="left:933px;top:150px;width:1px;height:701px;background:#c8c8c8;"></div>
<div style="left:933px;top:464px;width:7px;height:73px;background:#000;"></div>
<svg style="left:935px;top:496px;" width="4" height="8" viewBox="0 0 4 8"><path d="M0 0 V8 L4 4 Z" fill="#fff"/></svg>
<div style="left:944px;top:162px;width:2px;height:2px;background:#777;"></div>
<div style="left:944px;top:166px;width:2px;height:2px;background:#777;"></div>
<div style="left:944px;top:170px;width:2px;height:2px;background:#777;"></div>
<div style="left:944px;top:173px;width:2px;height:2px;background:#777;"></div>
<div style="left:953.00px;top:159.05px;height:17.5px;line-height:17.5px;font-size:13.5px;font-weight:bold;color:#111;transform:scaleX(0.9648);transform-origin:0 0;">Свойства</div>
<div style="left:1369.0px;width:14px;text-align:center;top:158.5px;height:17px;line-height:17px;font-size:13px;font-weight:normal;color:#222;-webkit-text-stroke:0;">?</div>
<svg style="left:1392px;top:163px;" width="7" height="7" viewBox="0 0 7 7"><path d="M0.5 0.5 L6.5 6.5 M6.5 0.5 L0.5 6.5" stroke="#333" stroke-width="1"/></svg>
<svg style="left:1418px;top:161px;" width="11" height="9" viewBox="0 0 11 9"><path d="M0 0.5 H10.5 M0 4.5 H10.5 M0 8.5 H10.5" stroke="#222" stroke-width="1"/></svg>
<div style="left:942px;top:182px;width:461px;height:24px;background:#dfdfdf;"></div>
<svg style="left:947px;top:192px;" width="9" height="5" viewBox="0 0 9 5"><path d="M0 0 H9 L4.5 5 Z" fill="#555"/></svg>
<div style="left:965.00px;top:185.85px;height:17.5px;line-height:17.5px;font-size:13.5px;font-weight:bold;color:#111;transform:scaleX(0.9395);transform-origin:0 0;">Стиль</div>
<div style="left:1379px;top:193px;width:2px;height:2px;background:#888;"></div>
<div style="left:1383px;top:193px;width:2px;height:2px;background:#888;"></div>
<div style="left:1387px;top:193px;width:2px;height:2px;background:#888;"></div>
<div style="left:948px;top:213px;width:365px;height:24px;background:#fff;border:1px solid #bdbdbd;border-radius:3px;"></div>
<div style="left:1292px;top:214px;width:20px;height:22px;background:linear-gradient(#fdfdfd,#efefef);border-left:1px solid #c8c8c8;border-radius:0 2px 2px 0;"></div>
<svg style="left:1298.5px;top:223.0px;" width="8" height="4" viewBox="0 0 8 4"><path d="M0 0 H8 L4 4 Z" fill="#555"/></svg>
<div style="left:954.00px;top:216.85px;height:17.5px;line-height:17.5px;font-size:13.5px;font-weight:normal;color:#202020;transform:scaleX(0.9963);transform-origin:0 0;">Базовый</div>
<svg style="left:1327px;top:218px;" width="17" height="15" viewBox="0 0 17 15"><g transform="translate(3.5,11) rotate(-42)"><path d="M0 -4.2 H8 V4.2 H0 Z" fill="#e9bd77"/><rect x="8" y="-3.2" width="5.5" height="6.4" fill="#707070"/><rect x="14" y="-1.6" width="4.5" height="3.2" fill="#707070"/></g></svg>
<svg style="left:1353px;top:217px;" width="14" height="16" viewBox="0 0 14 16"><path d="M2 10 A5.5 5.5 0 0 1 9 2.5 M12 6 A5.5 5.5 0 0 1 5 13.5" fill="none" stroke="#444" stroke-width="1.2"/><path d="M7 0.5 L9.5 2.5 L7 4.5 M7 11.5 L4.5 13.5 L7 15.5" fill="none" stroke="#444" stroke-width="1.2"/></svg>
<svg style="left:1379px;top:220px;" width="12" height="12" viewBox="0 0 12 12"><path d="M6 0 V12 M0 6 H12" stroke="#333" stroke-width="1.2"/></svg>
<div style="left:942px;top:246px;width:461px;height:24px;background:#dfdfdf;"></div>
<svg style="left:947px;top:256px;" width="9" height="5" viewBox="0 0 9 5"><path d="M0 0 H9 L4.5 5 Z" fill="#555"/></svg>
<div style="left:965.00px;top:249.85000000000002px;height:17.5px;line-height:17.5px;font-size:13.5px;font-weight:bold;color:#111;transform:scaleX(0.9658);transform-origin:0 0;">Символы</div>
<div style="left:1379px;top:257px;width:2px;height:2px;background:#888;"></div>
<div style="left:1383px;top:257px;width:2px;height:2px;background:#888;"></div>
<div style="left:1387px;top:257px;width:2px;height:2px;background:#888;"></div>
<div style="left:948px;top:277px;width:362px;height:24px;background:#fff;border:1px solid #bdbdbd;border-radius:3px;"></div>
<div style="left:1289px;top:278px;width:20px;height:22px;background:linear-gradient(#fdfdfd,#efefef);border-left:1px solid #c8c8c8;border-radius:0 2px 2px 0;"></div>
<svg style="left:1295.5px;top:287.0px;" width="8" height="4" viewBox="0 0 8 4"><path d="M0 0 H8 L4 4 Z" fill="#555"/></svg>
<div style="left:954.00px;top:280.85px;height:17.5px;line-height:17.5px;font-size:13.5px;font-weight:normal;color:#202020;transform:scaleX(0.9472);transform-origin:0 0;">Open Sans</div>
<div style="left:1325px;top:277px;width:72px;height:24px;background:#fff;border:1px solid #bdbdbd;border-radius:3px;"></div>
<div style="left:1376px;top:278px;width:20px;height:22px;background:linear-gradient(#fdfdfd,#efefef);border-left:1px solid #c8c8c8;border-radius:0 2px 2px 0;"></div>
<svg style="left:1382.5px;top:287.0px;" width="8" height="4" viewBox="0 0 8 4"><path d="M0 0 H8 L4 4 Z" fill="#555"/></svg>
<div style="left:1332.00px;top:280.85px;height:17.5px;line-height:17.5px;font-size:13.5px;font-weight:normal;color:#202020;transform:scaleX(0.9608);transform-origin:0 0;">10 пт</div>
<div style="left:948px;top:306px;width:26px;height:27px;background:#dcdcdc;border:1px solid #c6c6c6;border-radius:3px;"></div>
<div style="left:950.5px;width:20px;text-align:center;top:311.0px;height:17px;line-height:17px;font-size:13px;font-weight:bold;color:#444;">B</div>
<div style="left:975.0px;width:20px;text-align:center;top:310.5px;height:18px;line-height:18px;font-size:14px;font-weight:normal;color:#555;font-family:'Liberation Serif';"><i>I</i></div>
<div style="left:999.0px;width:20px;text-align:center;top:310.5px;height:17px;line-height:17px;font-size:13px;font-weight:normal;color:#555;"><u>U</u></div>
<svg style="left:1023px;top:318px;" width="7" height="4" viewBox="0 0 7 4"><path d="M0 0 H7 L3.5 4 Z" fill="#111"/></svg>
<div style="left:1035.0px;width:24px;text-align:center;top:311.25px;height:15.5px;line-height:15.5px;font-size:11.5px;font-weight:normal;color:#555;"><s>abc</s></div>
<svg style="left:1063px;top:310px;" width="18" height="18" viewBox="0 0 18 18"><text x="2.5" y="16.5" font-family="Liberation Sans" font-size="18" fill="#aaa">A</text><text x="0" y="15" font-family="Liberation Sans" font-size="18" fill="#555">A</text></svg>
<svg style="left:1320px;top:310px;" width="18" height="18" viewBox="0 0 18 18"><path d="M1 15.5 L7.5 1.5 L9.5 12.5 M4 10.5 H9" stroke="#333" stroke-width="1.3" fill="none"/><path d="M0 17 H7" stroke="#333" stroke-width="1"/><g transform="translate(11.5,12.5) rotate(-38)"><rect x="-5.5" y="-3.5" width="11" height="7" fill="#d42222"/><rect x="-2.5" y="-2" width="6.5" height="3.5" fill="#f08a8a"/></g></svg>
<svg style="left:1354px;top:312px;" width="16" height="15" viewBox="0 0 16 15"><text x="0" y="14" font-family="Liberation Sans" font-size="15" fill="#555">A</text><path d="M10 4 L12.5 1 L15 4 Z" fill="#3b7fc4"/></svg>
<svg style="left:1380px;top:312px;" width="16" height="15" viewBox="0 0 16 15"><text x="0" y="14" font-family="Liberation Sans" font-size="12" fill="#555">A</text><path d="M10 1 L12.5 4 L15 1 Z" fill="#3b7fc4"/></svg>
<svg style="left:950px;top:340px;" width="17" height="18" viewBox="0 0 17 18"><path d="M4 13 L8.5 3.5 L13 13 M5.5 9.5 H11.5" stroke="#555" stroke-width="2" fill="none"/><rect x="0" y="13" width="17" height="4" fill="#000"/></svg>
<svg style="left:973px;top:348px;" width="7" height="4" viewBox="0 0 7 4"><path d="M0 0 H7 L3.5 4 Z" fill="#111"/></svg>
<svg style="left:992px;top:340px;" width="19" height="17" viewBox="0 0 19 17"><text x="0" y="9" font-family="Liberation Sans" font-size="11" fill="#b8b8b8">AV</text><path d="M1 13.5 H16 M3.5 11 L1 13.5 L3.5 16 M13.5 11 L16 13.5 L13.5 16" stroke="#b8b8b8" stroke-width="1" fill="none"/></svg>
<svg style="left:1015px;top:348px;" width="7" height="4" viewBox="0 0 7 4"><path d="M0 0 H7 L3.5 4 Z" fill="#bbb"/></svg>
<div style="left:1350.0px;width:20px;text-align:center;top:341.0px;height:16px;line-height:16px;font-size:12px;font-weight:normal;color:#b8b8b8;">X<sup style="font-size:7px">2</sup></div>
<div style="left:1376.0px;width:20px;text-align:center;top:341.0px;height:16px;line-height:16px;font-size:12px;font-weight:normal;color:#b8b8b8;">X<sub style="font-size:7px">2</sub></div>
<div style="left:942px;top:370px;width:461px;height:24px;background:#dfdfdf;"></div>
<svg style="left:947px;top:380px;" width="9" height="5" viewBox="0 0 9 5"><path d="M0 0 H9 L4.5 5 Z" fill="#555"/></svg>
<div style="left:965.00px;top:373.85px;height:17.5px;line-height:17.5px;font-size:13.5px;font-weight:bold;color:#111;transform:scaleX(1.0185);transform-origin:0 0;">Формат чисел</div>
<div style="left:1379px;top:381px;width:2px;height:2px;background:#888;"></div>
<div style="left:1383px;top:381px;width:2px;height:2px;background:#888;"></div>
<div style="left:1387px;top:381px;width:2px;height:2px;background:#888;"></div>
<div style="left:954.00px;top:405.55px;height:15.5px;line-height:15.5px;font-size:11.5px;font-weight:normal;color:#555;transform:scaleX(0.8758);transform-origin:0 0;">0.0</div>
<div style="left:980.00px;top:403.5px;height:19px;line-height:19px;font-size:15px;font-weight:normal;color:#555;transform:scaleX(0.9738);transform-origin:0 0;">%</div>
<svg style="left:1000px;top:404px;" width="18" height="18" viewBox="0 0 18 18"><rect x="1.6" y="1.6" width="15.4" height="8" fill="#fff" stroke="#3a74b4" stroke-width="1.3"/><rect x="1" y="1" width="3" height="2.5" fill="#3a74b4"/><rect x="14" y="1" width="3" height="2.5" fill="#3a74b4"/><rect x="1" y="8" width="3" height="2.4" fill="#3a74b4"/><circle cx="9" cy="5.5" r="2.4" fill="#3a74b4"/><rect x="10" y="8" width="8" height="10" fill="#efefef"/><rect x="5" y="11.5" width="6" height="7" fill="#efefef"/><ellipse cx="14" cy="9.5" rx="3.5" ry="1.3" fill="#e8bd78"/><path d="M11.5 12 H16.5 M11.5 14 H16.5" stroke="#e8bd78" stroke-width="1"/><ellipse cx="8.5" cy="14.3" rx="3.5" ry="1.3" fill="#e8bd78"/><path d="M6 16.5 H11 M6 18.3 H11" stroke="#e8bd78" stroke-width="1"/></svg>
<svg style="left:1024px;top:412px;" width="7" height="4" viewBox="0 0 7 4"><path d="M0 0 H7 L3.5 4 Z" fill="#111"/></svg>
<div style="left:1048px;top:401px;width:349px;height:24px;background:linear-gradient(#fdfdfd,#f0f0f0);border:1px solid #bdbdbd;border-radius:3px;"></div>
<svg style="left:1381px;top:411px;" width="10" height="5" viewBox="0 0 10 5"><path d="M0 0 H10 L5 5 Z" fill="#555"/></svg>
<div style="left:1054.00px;top:404.75px;height:17.5px;line-height:17.5px;font-size:13.5px;font-weight:normal;color:#111;transform:scaleX(1.0132);transform-origin:0 0;">Общий</div>
<div style="left:948.00px;top:432.65px;height:17.5px;line-height:17.5px;font-size:13.5px;font-weight:normal;color:#111;transform:scaleX(1.0064);transform-origin:0 0;"><u>Д</u>робная часть</div>
<div style="left:1048px;top:431px;width:349px;height:21px;background:#fff;border:1px solid #bdbdbd;border-radius:3px;"></div>
<div style="left:1382px;top:432px;width:14px;height:19px;background:linear-gradient(#fdfdfd,#efefef);border-left:1px solid #d0d0d0;border-radius:0 2px 2px 0;"></div>
<svg style="left:1385.5px;top:436.0px;" width="7" height="4" viewBox="0 0 7 4"><path d="M0 4 H7 L3.5 0 Z" fill="#555"/></svg>
<svg style="left:1385.5px;top:443.0px;" width="7" height="4" viewBox="0 0 7 4"><path d="M0 0 H7 L3.5 4 Z" fill="#888"/></svg>
<div style="left:1054px;top:433.25px;height:17.5px;line-height:17.5px;font-size:13.5px;font-weight:normal;color:#202020;"></div>
<div style="left:948.00px;top:457.75px;height:17.5px;line-height:17.5px;font-size:13.5px;font-weight:normal;color:#111;transform:scaleX(0.9805);transform-origin:0 0;">Ведущие <u>н</u>ули:</div>
<div style="left:1048px;top:456px;width:349px;height:21px;background:#fff;border:1px solid #bdbdbd;border-radius:3px;"></div>
<div style="left:1382px;top:457px;width:14px;height:19px;background:linear-gradient(#fdfdfd,#efefef);border-left:1px solid #d0d0d0;border-radius:0 2px 2px 0;"></div>
<svg style="left:1385.5px;top:461.0px;" width="7" height="4" viewBox="0 0 7 4"><path d="M0 4 H7 L3.5 0 Z" fill="#555"/></svg>
<svg style="left:1385.5px;top:468.0px;" width="7" height="4" viewBox="0 0 7 4"><path d="M0 0 H7 L3.5 4 Z" fill="#555"/></svg>
<div style="left:1054px;top:458.25px;height:17.5px;line-height:17.5px;font-size:13.5px;font-weight:normal;color:#202020;">1</div>
<div style="left:948px;top:482px;width:14px;height:14px;background:#fff;border:1px solid #bdbdbd;border-radius:2px;"></div>
<div style="left:970.00px;top:480.65px;height:17.5px;line-height:17.5px;font-size:13.5px;font-weight:normal;color:#111;transform:scaleX(1.0018);transform-origin:0 0;"><u>О</u>трицательные числа красным</div>
<div style="left:948px;top:503px;width:14px;height:14px;background:#fff;border:1px solid #bdbdbd;border-radius:2px;"></div>
<div style="left:970.00px;top:501.65px;height:17.5px;line-height:17.5px;font-size:13.5px;font-weight:normal;color:#111;transform:scaleX(0.9844);transform-origin:0 0;">Ра<u>з</u>делитель разрядов</div>
<div style="left:942px;top:526px;width:461px;height:24px;background:#dfdfdf;"></div>
<svg style="left:947px;top:536px;" width="9" height="5" viewBox="0 0 9 5"><path d="M0 0 H9 L4.5 5 Z" fill="#555"/></svg>
<div style="left:964.00px;top:529.85px;height:17.5px;line-height:17.5px;font-size:13.5px;font-weight:bold;color:#111;transform:scaleX(1.0258);transform-origin:0 0;">Выравнивание</div>
<div style="left:1379px;top:537px;width:2px;height:2px;background:#888;"></div>
<div style="left:1383px;top:537px;width:2px;height:2px;background:#888;"></div>
<div style="left:1387px;top:537px;width:2px;height:2px;background:#888;"></div>
<svg style="left:953px;top:563px;" width="14" height="13" viewBox="0 0 14 13"><path d="M0 1.5 H14 M0 4.5 H10 M0 7.5 H14 M0 10.5 H10" stroke="#555" stroke-width="1"/></svg>
<div style="left:973px;top:556px;width:25px;height:27px;background:#dcdcdc;border:1px solid #c6c6c6;border-radius:3px;"></div>
<svg style="left:978px;top:563px;" width="14" height="13" viewBox="0 0 14 13"><path d="M0 1.5 H14 M2 4.5 H12 M0 7.5 H14 M2 10.5 H12" stroke="#555" stroke-width="1"/></svg>
<svg style="left:1004px;top:563px;" width="14" height="13" viewBox="0 0 14 13"><path d="M0 1.5 H14 M4 4.5 H14 M0 7.5 H14 M4 10.5 H14" stroke="#555" stroke-width="1"/></svg>
<svg style="left:1029px;top:563px;" width="14" height="13" viewBox="0 0 14 13"><path d="M0 1.5 H14 M0 4.5 H14 M0 7.5 H14 M0 10.5 H14" stroke="#555" stroke-width="1"/></svg>
<svg style="left:1327px;top:561px;" width="13" height="15" viewBox="0 0 13 15"><rect x="0.6" y="0.6" width="11.8" height="7.3" rx="1.2" fill="#fff" stroke="#4a4538" stroke-width="1.25"/><path d="M6.5 15 V11.5" stroke="#3b7fc4" stroke-width="1.2"/><path d="M3.8 12.5 L6.5 9.5 L9.2 12.5 Z" fill="#3b7fc4"/></svg>
<div style="left:1346px;top:556px;width:25px;height:27px;background:#dcdcdc;border:1px solid #c6c6c6;border-radius:3px;"></div>
<svg style="left:1352px;top:561px;" width="13" height="15" viewBox="0 0 13 15"><rect x="0.6" y="4.6" width="11.8" height="6.3" rx="1.2" fill="#fff" stroke="#4a4538" stroke-width="1.25"/><path d="M6.5 0 V2" stroke="#3b7fc4" stroke-width="1.2"/><path d="M4 1.5 L6.5 4 L9 1.5 Z M4 14 L6.5 11.5 L9 14 Z" fill="#3b7fc4"/><path d="M6.5 13.5 V15.5" stroke="#3b7fc4" stroke-width="1.2"/></svg>
<svg style="left:1378px;top:562px;" width="13" height="15" viewBox="0 0 13 15"><rect x="0.6" y="6.6" width="11.8" height="7.3" rx="1.2" fill="#fff" stroke="#4a4538" stroke-width="1.25"/><path d="M6.5 0 V3" stroke="#3b7fc4" stroke-width="1.2"/><path d="M3.8 2.5 L6.5 5.5 L9.2 2.5 Z" fill="#3b7fc4"/></svg>
<svg style="left:952px;top:591px;" width="17" height="14" viewBox="0 0 17 14"><path d="M0 0.5 H16 M8 3.5 H16 M8 6.5 H16 M8 9.5 H16 M0 12.5 H16" stroke="#555" stroke-width="1"/><path d="M0.5 7 H5.5 M3.5 4.5 L6 7 L3.5 9.5" stroke="#3b7fc4" stroke-width="1.4" fill="none"/></svg>
<svg style="left:977px;top:591px;" width="17" height="14" viewBox="0 0 17 14"><path d="M0 0.5 H16 M8 3.5 H16 M8 6.5 H16 M8 9.5 H16 M0 12.5 H16" stroke="#555" stroke-width="1"/><path d="M6.5 7 H1.5 M3.5 4.5 L1 7 L3.5 9.5" stroke="#3b7fc4" stroke-width="1.4" fill="none"/></svg>
<div style="left:1175px;top:587px;width:221px;height:25px;background:#fff;border:1px solid #bdbdbd;border-radius:3px;"></div>
<div style="left:1381px;top:588px;width:14px;height:23px;background:linear-gradient(#fdfdfd,#efefef);border-left:1px solid #d0d0d0;border-radius:0 2px 2px 0;"></div>
<svg style="left:1384.5px;top:594.0px;" width="7" height="4" viewBox="0 0 7 4"><path d="M0 4 H7 L3.5 0 Z" fill="#999"/></svg>
<svg style="left:1384.5px;top:601.0px;" width="7" height="4" viewBox="0 0 7 4"><path d="M0 0 H7 L3.5 4 Z" fill="#999"/></svg>
<div style="left:1181px;top:591.25px;height:17.5px;line-height:17.5px;font-size:13.5px;font-weight:normal;color:#b0b0b0;">0 пт</div>
<div style="left:948.00px;top:618.85px;height:17.5px;line-height:17.5px;font-size:13.5px;font-weight:normal;color:#111;transform:scaleX(0.9920);transform-origin:0 0;">Ориентация текста:</div>
<div style="left:1175px;top:617px;width:221px;height:22px;background:#fff;border:1px solid #bdbdbd;border-radius:3px;"></div>
<div style="left:1381px;top:618px;width:14px;height:20px;background:linear-gradient(#fdfdfd,#efefef);border-left:1px solid #d0d0d0;border-radius:0 2px 2px 0;"></div>
<svg style="left:1384.5px;top:622.5px;" width="7" height="4" viewBox="0 0 7 4"><path d="M0 4 H7 L3.5 0 Z" fill="#444"/></svg>
<svg style="left:1384.5px;top:629.5px;" width="7" height="4" viewBox="0 0 7 4"><path d="M0 0 H7 L3.5 4 Z" fill="#999"/></svg>
<div style="left:1181px;top:619.75px;height:17.5px;line-height:17.5px;font-size:13.5px;font-weight:normal;color:#202020;">0°</div>
<div style="left:948px;top:647px;width:14px;height:14px;background:#fff;border:1px solid #bdbdbd;border-radius:2px;"></div>
<div style="left:970.00px;top:645.75px;height:17.5px;line-height:17.5px;font-size:13.5px;font-weight:normal;color:#111;transform:scaleX(0.9931);transform-origin:0 0;">По вертикали</div>
<div style="left:1273px;top:641px;width:39px;height:27px;background:#dcdcdc;border:1px solid #c6c6c6;border-radius:3px;"></div>
<div style="left:1315px;top:641px;width:39px;height:27px;background:#f3f3f3;border:1px solid #c6c6c6;border-radius:3px;"></div>
<div style="left:1357px;top:641px;width:39px;height:27px;background:#f3f3f3;border:1px solid #c6c6c6;border-radius:3px;"></div>
<svg style="left:1286px;top:648px;" width="13" height="12" viewBox="0 0 13 12"><path d="M3 0.5 H12.5 L10 11.5 H0.5 Z" fill="none" stroke="#444" stroke-width="1"/><path d="M0.5 11 H10" stroke="#5050e0" stroke-width="2"/></svg>
<svg style="left:1327px;top:648px;" width="13" height="12" viewBox="0 0 13 12"><path d="M3 0.5 H12.5 L10 11.5 H0.5 Z" fill="none" stroke="#444" stroke-width="1"/><path d="M3 1 H12.5" stroke="#5050e0" stroke-width="2"/></svg>
<svg style="left:1372px;top:649px;" width="10" height="11" viewBox="0 0 10 11"><rect x="0.5" y="0.5" width="9" height="10" fill="none" stroke="#444" stroke-width="1"/></svg>
<div style="left:948px;top:673px;width:14px;height:14px;background:#fff;border:1px solid #bdbdbd;border-radius:2px;"></div>
<div style="left:970.00px;top:671.85px;height:17.5px;line-height:17.5px;font-size:13.5px;font-weight:normal;color:#111;transform:scaleX(1.0003);transform-origin:0 0;">Переносить текст</div>
<div style="left:948px;top:694px;width:14px;height:14px;background:#fff;border:1px solid #bdbdbd;border-radius:2px;"></div>
<svg style="left:950px;top:696px;" width="10" height="10" viewBox="0 0 10 10"><path d="M1 5 L4 9 L9 0.5" stroke="#111" stroke-width="1.6" fill="none"/></svg>
<div style="left:970.00px;top:692.65px;height:17.5px;line-height:17.5px;font-size:13.5px;font-weight:normal;color:#111;transform:scaleX(1.0270);transform-origin:0 0;">Объединить ячейки</div>
<div style="left:942px;top:717px;width:461px;height:24px;background:#dfdfdf;"></div>
<svg style="left:947px;top:727px;" width="9" height="5" viewBox="0 0 9 5"><path d="M0 0 H9 L4.5 5 Z" fill="#555"/></svg>
<div style="left:964.00px;top:720.85px;height:17.5px;line-height:17.5px;font-size:13.5px;font-weight:bold;color:#111;transform:scaleX(1.0560);transform-origin:0 0;">Внешний вид ячеек</div>
<div style="left:1379px;top:728px;width:2px;height:2px;background:#888;"></div>
<div style="left:1383px;top:728px;width:2px;height:2px;background:#888;"></div>
<div style="left:1387px;top:728px;width:2px;height:2px;background:#888;"></div>
<div style="left:948.00px;top:751.75px;height:17.5px;line-height:17.5px;font-size:13.5px;font-weight:normal;color:#111;transform:scaleX(1.0360);transform-origin:0 0;">Фон:</div>
<svg style="left:1300px;top:751px;" width="16" height="16" viewBox="0 0 16 16"><path d="M2 7 L6.5 2.5 L11 7 L6.5 11.5 Z" fill="#fff" stroke="#444" stroke-width="1"/><path d="M5 0 V4" stroke="#444" stroke-width="1"/><path d="M11 7 Q13 9 11.5 10.5" stroke="#3b7fc4" stroke-width="2" fill="none"/><rect x="0" y="12" width="15" height="4" fill="#ffef00"/></svg>
<div style="left:1318px;top:754px;width:61px;height:12px;background:#efefef;border:1px solid #c8c8c8;"></div>
<svg style="left:1386px;top:759px;" width="8" height="4" viewBox="0 0 8 4"><path d="M0 0 H8 L4 4 Z" fill="#111"/></svg>
<div style="left:953px;top:783px;width:42px;height:42px;background:#fff;border:1px solid #222;"></div>
<svg style="left:955px;top:785px;" width="38" height="38" viewBox="0 0 38 38"><path d="M19 3 V36 M3 19 H36" stroke="#3a6ea5" stroke-width="1" stroke-dasharray="1 2"/></svg>
<svg style="left:1000px;top:803px;" width="8" height="4" viewBox="0 0 8 4"><path d="M0 0 H8 L4 4 Z" fill="#111"/></svg>
<div style="left:1306px;top:788px;width:74px;height:1px;background:#222;"></div>
<svg style="left:1386px;top:787px;" width="8" height="4" viewBox="0 0 8 4"><path d="M0 0 H8 L4 4 Z" fill="#111"/></svg>
<svg style="left:1303px;top:810px;" width="14" height="14" viewBox="0 0 14 14"><path d="M1 13 L5 9 L7 11 Z" fill="#3b7fc4"/><path d="M5 9 L12 1" stroke="#555" stroke-width="1.8"/></svg>
<div style="left:1318px;top:812px;width:61px;height:12px;background:#000;"></div>
<svg style="left:1386px;top:818px;" width="8" height="4" viewBox="0 0 8 4"><path d="M0 0 H8 L4 4 Z" fill="#111"/></svg>
<div style="left:1405px;top:179px;width:36px;height:37px;background:#dcdcdc;border:1px solid #c6c6c6;border-radius:3px;"></div>
<svg style="left:1412px;top:186px;" width="22" height="22" viewBox="0 0 22 22"><rect x="1.5" y="1.5" width="3" height="3" fill="none" stroke="#555" stroke-width="1"/><rect x="1.5" y="7.5" width="3" height="3" fill="none" stroke="#555" stroke-width="1"/><path d="M8 3.5 H20 M8 9.5 H16 M8 15.5 H20 M8 21.5 H20" stroke="#666" stroke-width="1"/><path d="M0 14 L2.5 17 L6.5 12 M0 20 L2.5 23 L6.5 18" stroke="#1ea060" stroke-width="1.6" fill="none"/></svg>
<svg style="left:1410px;top:221px;" width="26" height="26" viewBox="0 0 26 26"><text x="0" y="19.5" font-family="Liberation Sans" font-weight="bold" font-size="24" fill="#3b7fc4">A</text><path d="M22.5 3.5 L25.5 6.5 L17.5 17 L14 14 Z" fill="#6a6a6a"/><path d="M13.5 13.5 Q7.5 15.5 5 25 Q13.5 25.5 18 18 Z" fill="#3b7fc4" stroke="#efefef" stroke-width="1"/><ellipse cx="13" cy="19.5" rx="2.2" ry="1.5" fill="#fff" transform="rotate(-35 13 19.5)"/></svg>
<svg style="left:1412px;top:259px;" width="21" height="21" viewBox="0 0 21 21"><rect x="0.75" y="0.75" width="19.5" height="19.5" fill="#fafafa" stroke="#555" stroke-width="1.5"/><path d="M1.5 19.5 V13 L5 10 L9 13 L13 11 L19.5 14 V19.5 Z" fill="#c4d7ea"/><circle cx="14.5" cy="5.5" r="2.2" fill="#f0b060"/></svg>
<svg style="left:1410px;top:292px;" width="24" height="24" viewBox="0 0 24 24"><circle cx="12" cy="12" r="10.5" fill="#fff" stroke="#7a7a7a" stroke-width="2.2"/><path d="M17 7 L13.2 13.2 L10.8 10.8 Z" fill="#e04040"/><path d="M7 17 L10.8 10.8 L13.2 13.2 Z" fill="#3b7fc4"/><text x="9.2" y="8" font-family="Liberation Sans" font-weight="bold" font-size="6" fill="#333">N</text></svg>
<div style="left:1407.5px;width:30px;text-align:center;top:326.0px;height:28px;line-height:28px;font-size:23px;font-weight:normal;color:#333;font-family:'Liberation Serif';"><i>fx</i></div>
<div style="left:1444px;top:1px;width:2px;height:877px;background:#f6f6f6;"></div>
<div style="left:1446px;top:0px;width:1px;height:878px;background:#5a5a5a;"></div>
</div></body></html>
